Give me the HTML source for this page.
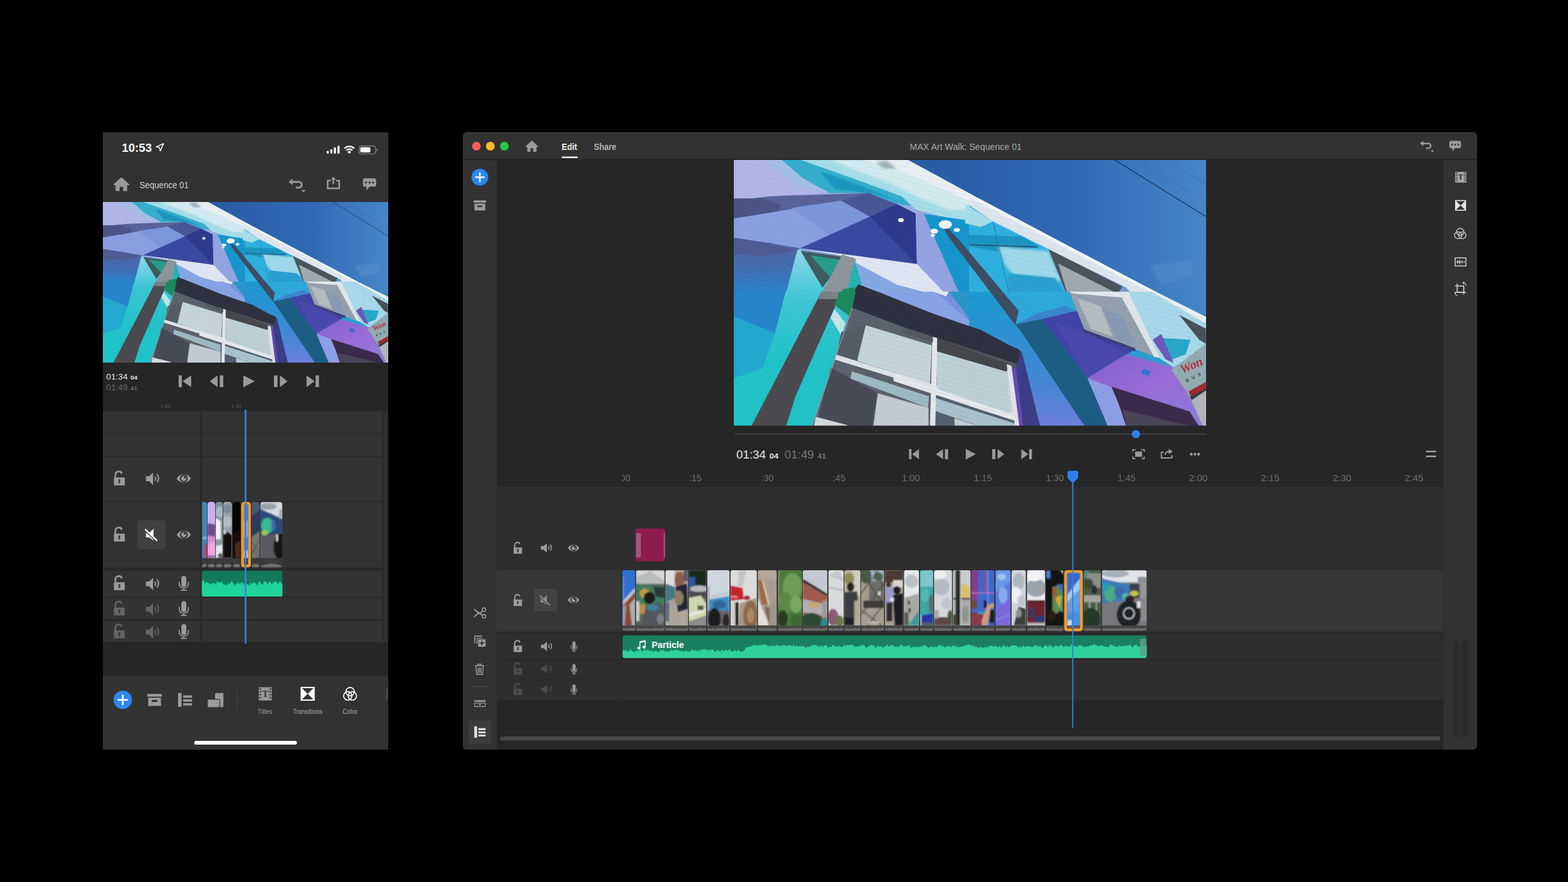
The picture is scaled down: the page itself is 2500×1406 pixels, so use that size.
<!DOCTYPE html>
<html lang="en"><head><meta charset="utf-8"><title>Rush – mobile and desktop</title>
<style>
html,body{margin:0;padding:0;background:#000}
body{width:2500px;height:1406px;overflow:hidden;position:relative;font-family:"Liberation Sans", sans-serif}
.phone{position:absolute;left:164px;top:211px;width:455px;height:984px;background:#323232;overflow:hidden}
.win{position:absolute;left:738px;top:211px;width:1617px;height:984px;background:#262626;border-radius:6px;overflow:hidden}
.phone>svg,.win>svg{position:absolute;left:0;top:0;display:block}
.defs{position:absolute;width:0;height:0;overflow:hidden}
text{font-family:"Liberation Sans", sans-serif}
</style></head>
<body>
<svg class="defs" width="0" height="0" aria-hidden="true"><defs>
<symbol id="i-home" viewBox="0 0 20 18" preserveAspectRatio="none" overflow="visible"><path fill="currentColor" d="M10 0L20 9.3v1h-2.6V18h-5.2v-5.6H7.8V18H2.6v-7.7H0v-1z"/></symbol>
<symbol id="i-undo" viewBox="0 0 27.3 21.4" preserveAspectRatio="none" overflow="visible"><path fill="currentColor" d="M0 4.9L6.6 0v9.9z"/><path fill="none" stroke="currentColor" stroke-width="3" d="M6 4.9h10.6a4.5 4.5 0 0 1 0 9h-4.8"/><path fill="currentColor" d="M20.7 17.7h6.6l-3.3 3.7z"/></symbol>
<symbol id="i-share" viewBox="0 0 20.9 19.7" preserveAspectRatio="none" overflow="visible"><path fill="none" stroke="currentColor" stroke-width="2.5" d="M6.2 6.05H1.25v12.4h18.4V6.05H14.7"/><path fill="currentColor" d="M10.45 0l4.1 4.7h-2.85v7H9.2v-7H6.35z"/></symbol>
<symbol id="i-comment" viewBox="0 0 20.9 19.4" preserveAspectRatio="none" overflow="visible"><path fill="currentColor" fill-rule="evenodd" d="M2.6 0h15.7a2.6 2.6 0 0 1 2.6 2.6v8.2a2.6 2.6 0 0 1-2.6 2.6h-8L5.4 19.4v-6H2.6A2.6 2.6 0 0 1 0 10.8V2.6A2.6 2.6 0 0 1 2.6 0zM3.1 6.7a1.7 1.7 0 1 0 3.4 0a1.7 1.7 0 1 0-3.4 0zM8.75 6.7a1.7 1.7 0 1 0 3.4 0a1.7 1.7 0 1 0-3.4 0zM14.4 6.7a1.7 1.7 0 1 0 3.4 0a1.7 1.7 0 1 0-3.4 0z"/></symbol>
<symbol id="i-skipstart" viewBox="0 0 20 18.3" preserveAspectRatio="none" overflow="visible"><path fill="currentColor" d="M0 0h5.1v18.3H0zM6.4 9.15L20 0v18.3z"/></symbol>
<symbol id="i-stepback" viewBox="0 0 21.6 18.3" preserveAspectRatio="none" overflow="visible"><path fill="currentColor" d="M0 9.15L12.5 0v18.3zM16 0h5.6v18.3H16z"/></symbol>
<symbol id="i-play" viewBox="0 0 18.1 18.7" preserveAspectRatio="none" overflow="visible"><path fill="currentColor" d="M0 0l18.1 9.35L0 18.7z"/></symbol>
<symbol id="i-stepfwd" viewBox="0 0 21.6 18.3" preserveAspectRatio="none" overflow="visible"><path fill="currentColor" d="M0 0h5.6v18.3H0zM9.6 0l12 9.15-12 9.15z"/></symbol>
<symbol id="i-skipend" viewBox="0 0 19.7 18.3" preserveAspectRatio="none" overflow="visible"><path fill="currentColor" d="M0 0l12.8 9.15L0 18.3zM14.4 0h5.3v18.3h-5.3z"/></symbol>
<symbol id="i-lock" viewBox="0 0 17.8 23.6" preserveAspectRatio="none" overflow="visible"><path fill="currentColor" fill-rule="evenodd" d="M.3 11.1h17.2v12.5H.3zM7.2 15.6a1.7 1.7 0 1 1 2.7 1.4l.5 3.1H7.4l.5-3.100a1.700 1.700 0 0 1-.700-1.400z"/><path fill="none" stroke="currentColor" stroke-width="2.600" d="M2.600 11.500V6.600A5.300 5.300 0 0 1 12.900 4.900"/></symbol>
<symbol id="i-speaker" viewBox="0 0 21 20.1" preserveAspectRatio="none" overflow="visible"><path fill="currentColor" d="M0 6h5.100L11.400 0v20.100L5.100 13.600H0z"/><path fill="none" stroke="currentColor" stroke-width="2" d="M14 6.300a4.700 4.700 0 0 1 0 6.800M17.300 2.800a8.600 8.600 0 0 1 0 12.700"/></symbol>
<symbol id="i-eye" viewBox="0 0 22.8 16.4" preserveAspectRatio="none" overflow="visible"><path fill="currentColor" d="M0 8.200C4.600-.500 18.200-.500 22.800 8.200c-4.600 8.700-18.200 8.700-22.800 0z"/><circle cx="11.400" cy="8.200" r="6.300" fill="#323232"/><circle cx="11.400" cy="8.200" r="4" fill="currentColor"/><circle cx="13.100" cy="6.500" r="1.700" fill="#323232"/></symbol>
<symbol id="i-mute" viewBox="0 0 20 20.5" preserveAspectRatio="none" overflow="visible"><path fill="currentColor" d="M1.600 7.200h5L13.600 .700v18.500l-7-5.100h-5z"/><path stroke="#414141" stroke-width="1.700" d="M-.500 3.300l18 17.300"/><path stroke="currentColor" stroke-width="2.500" stroke-linecap="round" d="M1 1.900l17.800 17.100"/></symbol>
<symbol id="i-mic" viewBox="0 0 16.2 23.7" preserveAspectRatio="none" overflow="visible"><rect x="4.300" y="0" width="7.800" height="17.700" rx="3.900" fill="currentColor"/><path fill="none" stroke="currentColor" stroke-width="1.700" d="M.900 9.300v3.200a7.200 7.200 0 0 0 14.400 0V9.300M8.100 19.700v2.800M3.600 22.900h9.300"/></symbol>
<symbol id="i-archive" viewBox="0 0 23.5 19.1" preserveAspectRatio="none" overflow="visible"><path fill="currentColor" fill-rule="evenodd" d="M0 0h23.5v4.3H0zM1.6 6.1h20.3v13H1.6zM7.3 9.6h8.9v3.3H7.3z"/></symbol>
<symbol id="i-list" viewBox="0 0 22.3 22.1" preserveAspectRatio="none" overflow="visible"><path fill="currentColor" d="M0 0h5.6v22.1H0zM8.2 3.8h14.1v3.7H8.2zM8.2 10h14.1v3.7H8.2zM8.2 16.2h14.1v3.6H8.2z"/></symbol>
<symbol id="i-layers" viewBox="0 0 24.9 22.5" preserveAspectRatio="none" overflow="visible"><rect x="11.6" y="0" width="13.3" height="22.5" rx="1.2" fill="currentColor"/><rect x="-.9" y="9.6" width="20.6" height="14" rx="1.2" fill="#323232"/><rect x="0" y="10.6" width="18.6" height="11.9" rx="1" fill="currentColor"/></symbol>
<symbol id="i-titles" viewBox="0 0 20.6 21.1" preserveAspectRatio="none" overflow="visible"><rect width="20.6" height="21.1" fill="currentColor"/><rect x="1.1" y="1.6" width="2" height="2.2" fill="#323232"/><rect x="1.1" y="6.2" width="2" height="2.2" fill="#323232"/><rect x="1.1" y="10.8" width="2" height="2.2" fill="#323232"/><rect x="1.1" y="15.4" width="2" height="2.2" fill="#323232"/><rect x="17.5" y="1.6" width="2" height="2.2" fill="#323232"/><rect x="17.5" y="6.2" width="2" height="2.2" fill="#323232"/><rect x="17.5" y="10.8" width="2" height="2.2" fill="#323232"/><rect x="17.5" y="15.4" width="2" height="2.2" fill="#323232"/><rect x="3.9" y="0" width=".6" height="21.1" fill="#323232" opacity=".5"/><rect x="16.1" y="0" width=".6" height="21.1" fill="#323232" opacity=".5"/><text x="10.3" y="15.2" style="font-family:Liberation Serif,serif" font-weight="bold" font-size="15" text-anchor="middle" fill="#323232">T</text></symbol>
<symbol id="i-trans" viewBox="0 0 22.5 22.1" preserveAspectRatio="none" overflow="visible"><rect width="22.5" height="22.1" fill="currentColor"/><path fill="#323232" d="M2.1 2h18.3l-9.15 9.05zM2.1 20.1h18.3l-9.15-9.05z"/></symbol>
<symbol id="i-color" viewBox="0 0 22.5 22.1" preserveAspectRatio="none" overflow="visible"><g fill="none" stroke="currentColor" stroke-width="1.7"><circle cx="11.25" cy="7.6" r="6.7"/><circle cx="7.6" cy="14.4" r="6.7"/><circle cx="14.9" cy="14.4" r="6.7"/></g></symbol>
<symbol id="i-audiofx" viewBox="0 0 18.8 14.5" preserveAspectRatio="none" overflow="visible"><rect x=".8" y=".8" width="17.2" height="12.9" fill="none" stroke="currentColor" stroke-width="1.6"/><path fill="currentColor" d="M2 7.25l1.6-.6 1-3.2 1.1 3.2 1.3.2 1.2-4 1.3 4.2 1.2.1 1.1-3 1.1 3 1.3.1.9-2 .9 2 1.4 0-1.4 .3-.9 2-.9-2-1.3 .1-1.1 3-1.1-3-1.2 .1-1.3 4.2-1.2-4-1.3 .2-1.1 3.200-1-3.200z"/></symbol>
<symbol id="i-crop" viewBox="0 0 19.8 23.5" preserveAspectRatio="none" overflow="visible"><g fill="none" stroke="currentColor" stroke-width="1.8"><path d="M4.600 3.600v13.800h13.600"/><path d="M1.400 7.200h13.600v13.600"/><path d="M14.400 2.300a4.300 4.300 0 0 1 4.300 4.300" stroke-width="1.300"/><path d="M5.400 22.400a4.300 4.300 0 0 1-4.300-4.300" stroke-width="1.300"/></g><path fill="currentColor" d="M12.600 2.300l3-2.300v4.600zM1.100 20.300l-1.100-3.300h4.400z" transform="translate(0,0)"/></symbol>
<symbol id="i-scissors" viewBox="0 0 19.6 17.7" preserveAspectRatio="none" overflow="visible"><g fill="none" stroke="currentColor" stroke-width="1.6"><circle cx="16" cy="3.600" r="2.800"/><circle cx="16" cy="14.100" r="2.800"/></g><path fill="currentColor" d="M0 1.600l13.800 9.800-.9 1.700-5.300-2.900L0 16.100v-1.800l5.800-5.400L0 3.400zM13.600 5.200l.9 1.500-4.300 3-1.500-1.100z"/></symbol>
<symbol id="i-dup" viewBox="0 0 18 18" preserveAspectRatio="none" overflow="visible"><path fill="none" stroke="currentColor" stroke-width="1.600" d="M.800 12.400V.800h11.600"/><path fill="currentColor" fill-rule="evenodd" d="M3.600 3.600h10v1.400h-8.600v8.600h-1.400z"/><path fill="currentColor" fill-rule="evenodd" d="M6.200 6.200H18V18H6.200zM11.200 8.200h1.800v3h3v1.800h-3v3h-1.800v-3h-3v-1.800h3z"/></symbol>
<symbol id="i-trash" viewBox="0 0 15.7 18" preserveAspectRatio="none" overflow="visible"><path fill="none" stroke="currentColor" stroke-width="1.400" d="M.300 3.300h15.100M5.200 3V.700h5.300V3M1.900 3.600l1.300 13.700h9.300l1.300-13.700M5.600 6v9M7.850 6v9M10.100 6v9"/></symbol>
<symbol id="i-instrack" viewBox="0 0 18 10.8" preserveAspectRatio="none" overflow="visible"><path fill="currentColor" d="M0 0h18v2.600H0z"/><path fill="none" stroke="currentColor" stroke-width="1.300" d="M.650 4.600h16.700v5.500H.650z"/><path fill="currentColor" d="M6.800 6h4.400L9 8.800z"/></symbol>
<symbol id="i-fullscreen" viewBox="0 0 19.8 16" preserveAspectRatio="none" overflow="visible"><path fill="none" stroke="currentColor" stroke-width="1.700" d="M.850 4.600V.850h4.200M14.750 .850h4.200V4.600M18.950 11.400v3.750h-4.200M5.050 15.150H.850V11.400"/><rect x="4.400" y="3.800" width="11" height="8.400" fill="currentColor"/></symbol>
<symbol id="i-export" viewBox="0 0 19.2 15.5" preserveAspectRatio="none" overflow="visible"><path fill="none" stroke="currentColor" stroke-width="1.900" d="M4.600 5.500H.950v9.050h16.700v-4.200"/><path fill="none" stroke="currentColor" stroke-width="1.900" d="M7.200 9.200c0-3 2-4.900 6-4.900"/><path fill="currentColor" d="M12.600 0l6.600 4.300-6.600 4.300z"/></symbol>
<symbol id="i-note" viewBox="0 0 14.1 14.4" preserveAspectRatio="none" overflow="visible"><path fill="currentColor" d="M4.400 1.800L14.100 0v10.900a2.500 2.200 0 1 1-1.500-2V2.900L5.900 4.100v8.300a2.500 2.200 0 1 1-1.500-2z"/></symbol>
<linearGradient id="ph-sky" x1="0" y1="0" x2="1" y2="0"><stop offset="0" stop-color="#2a5aa2"/><stop offset=".55" stop-color="#3069b3"/><stop offset="1" stop-color="#4586c8"/></linearGradient>
<linearGradient id="ph-wall" x1="0" y1="0" x2="0" y2="1"><stop offset="0" stop-color="#aab2e6"/><stop offset=".45" stop-color="#7f9ddc"/><stop offset=".7" stop-color="#2f9fd0"/><stop offset="1" stop-color="#22c3c6"/></linearGradient>
<linearGradient id="ph-lw" x1="0" y1="0" x2="0" y2="1"><stop offset="0" stop-color="#3a7fd0"/><stop offset=".5" stop-color="#25a8cc"/><stop offset="1" stop-color="#22c6c8"/></linearGradient>
<linearGradient id="ph-band" x1="0" y1="0" x2="0" y2="1"><stop offset="0" stop-color="#1c9bd0"/><stop offset=".6" stop-color="#3d8ad4"/><stop offset="1" stop-color="#6c7fdc"/></linearGradient>
<linearGradient id="ph-purp" x1="0" y1="0" x2="1" y2="1"><stop offset="0" stop-color="#8463cc"/><stop offset=".5" stop-color="#9a6cd6"/><stop offset="1" stop-color="#8a7edc"/></linearGradient>
<linearGradient id="ph-slate" x1="0" y1="0" x2="0" y2="1"><stop offset="0" stop-color="#56629c"/><stop offset=".6" stop-color="#3f6fb4"/><stop offset="1" stop-color="#2786cc"/></linearGradient>
<linearGradient id="ph-wedge" gradientUnits="userSpaceOnUse" x1="0" y1="140" x2="0" y2="330"><stop offset="0" stop-color="#93d8ec"/><stop offset=".45" stop-color="#3cc6d4"/><stop offset="1" stop-color="#20c3c8"/></linearGradient>
<filter id="ph-b2" x="-10%" y="-10%" width="120%" height="120%"><feGaussianBlur stdDeviation="2.2"/></filter>
<filter id="ph-soft" x="-2%" y="-2%" width="104%" height="104%"><feGaussianBlur stdDeviation="0.7"/></filter>
<filter id="ph-b1" x="-10%" y="-10%" width="120%" height="120%"><feGaussianBlur stdDeviation="0.8"/></filter>
<pattern id="ph-brick" width="40" height="7" patternUnits="userSpaceOnUse" patternTransform="rotate(14)"><rect width="40" height="7" fill="none"/><path d="M0 .5h40" stroke="#0a1440" stroke-opacity=".05" stroke-width="1"/><path d="M10 0v7M30 0v7" stroke="#0a1440" stroke-opacity=".02" stroke-width="1"/></pattern>
<clipPath id="ph-clip"><rect width="753" height="423.6"/></clipPath>
<symbol id="photo" viewBox="0 0 753 423.6" preserveAspectRatio="none"><g clip-path="url(#ph-clip)"><g filter="url(#ph-soft)">
<rect width="753" height="423.6" fill="url(#ph-wall)"/>
<polygon points="0.0,0.0 79.5,0.0 116.2,27.5 152.9,52.0 61.2,57.3 0.0,63.5" fill="#b2b6e8" />
<polygon points="45.9,0.0 122.3,0.0 152.9,50.5 107.0,45.9" fill="#a3bfe6" filter="url(#ph-b2)"/>
<polygon points="76.5,0.0 122.3,0.0 191.1,29.1 267.6,56.6 282.9,73.4 259.9,70.3 214.1,52.8 152.9,52.8 110.1,29.1" fill="#35aecb" />
<polygon points="137.6,18.3 198.8,39.8 259.9,64.2 214.1,52.8 160.6,45.9" fill="#1f96c0" filter="url(#ph-b1)"/>
<polygon points="107.0,0.0 279.8,0.0 380.0,52.0 380.0,97.9 351.7,96.3 321.1,87.2 290.5,79.5 267.6,58.1 191.1,29.8" fill="#a5dde8" />
<polygon points="152.9,0.0 279.8,0.0 380.0,52.0 380.0,79.5 344.0,79.5 298.2,61.2 244.6,35.2 198.8,18.3" fill="#d2eaf0" filter="url(#ph-b2)"/>
<polygon points="203.4,0.0 279.8,0.0 380.0,52.0 380.0,67.3 298.2,30.6 244.6,9.2" fill="#e8eff4" />
<polygon points="226.3,3.1 244.6,1.5 259.9,13.8 238.5,13.8" fill="#9fb4bf" filter="url(#ph-b2)"/>
<polygon points="279.8,0.0 380.0,0.0 380.0,52.0" fill="#2a5aa2" />
<polygon points="0.0,64.2 61.2,57.8 214.1,52.8 259.9,70.6 217.1,90.2 171.3,65.0 76.5,81.0 0.0,93.3" fill="#59639a" />
<polygon points="0.0,61.2 45.9,61.2 76.5,71.9 65.7,85.6 0.0,93.3" fill="#4c5486" />
<polygon points="0.0,93.3 76.5,81.0 171.3,65.0 217.1,90.2 105.5,140.7 0.0,123.9" fill="#8a9fe2" />
<polygon points="91.7,76.5 171.3,65.0 217.1,90.2 152.9,119.3" fill="#7d97dc" />
<polygon points="171.3,65.0 214.1,52.8 259.9,70.6 217.1,90.2" fill="#4a5796" />
<polygon points="217.1,90.2 259.9,70.6 289.8,85.6 292.0,165.9 105.5,140.7" fill="#3a48a0" />
<polygon points="217.1,90.2 259.9,70.6 289.8,85.6 291.3,165.9" fill="#2d3a8c" />
<polygon points="0.0,123.9 105.5,140.7 100.9,145.3 82.6,215.0 0.0,215.0" fill="url(#ph-slate)" />
<polygon points="0.0,123.9 61.2,133.0 100.9,145.3 45.9,152.9 0.0,149.8" fill="#4f5c94" />
<polygon points="105.5,141.4 154.4,188.1 137.6,215.0 82.6,215.0 100.9,145.3" fill="url(#ph-wedge)" />
<polygon points="106.4,145.0 171.8,154.1 153.5,187.6 141.4,203.5" fill="#3d5c60" />
<polygon points="121.6,151.8 170.2,159.4 153.5,186.8" fill="#2a9c8c" />
<polygon points="105.5,140.7 292.0,165.9 380.0,215.0 192.7,215.0 191.1,156.0" fill="#dfe6f3" />
<polygon points="191.1,162.1 259.9,198.8 321.1,215.0 192.7,215.0" fill="#86a7e2" />
<polygon points="191.1,156.0 191.1,215.0 175.8,215.0 188.1,154.4" fill="#5fb8d8" />
<polygon points="289.8,85.6 303.0,86.0 386.0,272.0 339.0,215.0 292.0,166.0" fill="#94a4e2" />
<polygon points="303.0,86.0 385.0,98.0 385.0,272.0 386.0,272.0" fill="#1796cc" />
<polygon points="172.8,150.6 195.0,158.3 178.9,215.0 139.9,215.0" fill="#8d959b" />
<polygon points="192.3,160.2 203.7,195.2 197.6,211.9 180.1,210.4" fill="#25b3b4" />
<polygon points="174.8,205.8 196.1,202.8 193.8,211.9 168.7,211.9" fill="#1d8a5c" />
<polygon points="199.1,198.2 230.3,210.4 192.3,210.7 195.8,201.5" fill="#2f3040" />
<polygon points="375.0,0.0 752.7,0.0 752.7,215.0 682.3,215.0 375.0,52.8" fill="url(#ph-sky)" />
<polygon points="665.5,168.2 726.7,160.6 734.3,183.5 680.8,198.8" fill="#5b90cc" filter="url(#ph-b2)" opacity=".6"/>
<polyline points="607.4,0.0 752.7,90.2" fill="none" stroke="#1b2c52" stroke-width="1.2" />
<polyline points="638.0,0.0 752.7,67.3" fill="none" stroke="#3a5f98" stroke-width="0.6" />
<polyline points="690.0,0.0 752.7,38.2" fill="none" stroke="#3a5f98" stroke-width="0.6" />
<polygon points="375.0,67.3 413.2,97.9 501.9,142.2 529.4,215.0 375.0,215.0" fill="#2eb0de" />
<polygon points="375.0,119.3 460.6,122.3 485.1,137.6 439.2,149.8 375.0,137.6" fill="#1f95c2" />
<polygon points="420.9,137.6 501.9,145.3 521.8,192.7 460.6,203.4 433.1,168.2" fill="#9fd9ea" filter="url(#ph-b2)"/>
<polygon points="439.2,180.4 512.6,188.1 527.9,215.0 436.2,215.0" fill="#2a9fd0" filter="url(#ph-b1)"/>
<polyline points="376.5,135.3 484.3,138.8" fill="none" stroke="#264a6a" stroke-width="1.5" />
<polyline points="409.4,79.5 439.2,215.0" fill="none" stroke="#2b6f98" stroke-width="0.8" />
<polygon points="368.9,70.3 413.2,97.9 393.3,107.0 368.9,100.9" fill="#a5dde8" />
<polygon points="375.0,52.8 682.3,215.0 634.9,215.0 625.8,203.4 501.9,142.2 413.2,97.9 375.0,71.9" fill="#dde6ec" />
<polygon points="375.0,52.8 682.3,215.0 671.6,215.0 375.0,58.9" fill="#f3f6f8" />
<polygon points="501.9,142.2 619.6,201.8 610.5,215.0 531.0,215.0" fill="#4c545a" />
<polygon points="517.2,165.1 610.5,212.5 610.5,215.0 532.5,215.0" fill="#a0aaae" />
<polygon points="0.0,210.0 137.6,210.0 82.6,425.0 0.0,425.0" fill="url(#ph-lw)" />
<polygon points="0.0,210.0 82.6,210.0 65.7,275.7 0.0,249.8" fill="#2786cc" />
<polygon points="82.6,210.0 138.4,210.0 85.6,362.9 45.9,425.0 0.0,425.0 0.0,347.6 65.7,275.7" fill="url(#ph-wedge)" />
<polygon points="0.0,249.8 65.7,275.7 45.9,332.3 0.0,347.6" fill="#24a9cf" />
<polygon points="139.9,210.0 172.0,210.0 130.0,304.8 97.9,378.2 83.3,425.0 27.5,425.0" fill="#4b4b50" />
<polygon points="139.9,210.0 172.0,210.0 166.7,222.2 134.6,221.5" fill="#7a8288" />
<polygon points="172.0,210.0 194.2,210.0 128.4,425.0 83.3,425.0 97.9,378.2 130.0,304.8" fill="url(#ph-wedge)" />
<polygon points="168.2,210.0 195.0,210.0 185.8,249.8 160.6,231.4" fill="#1d8a5c" />
<polygon points="160.6,237.5 178.1,260.5 171.3,280.3 154.4,251.3" fill="#bfe6e6" />
<polygon points="194.2,210.0 380.0,210.0 380.0,271.2 229.4,210.0" fill="#7a93de" />
<polygon points="229.4,210.0 321.1,210.0 380.0,260.5 380.0,271.2" fill="#88a3e6" />
<polygon points="318.0,210.0 342.5,210.0 338.7,217.6" fill="#e4ecf4" />
<polygon points="342.5,210.0 380.0,210.0 380.0,260.5 363.9,237.5" fill="#2a96c8" />
<polygon points="194.2,210.0 229.4,210.0 380.0,269.6 380.0,307.9 188.8,236.0" fill="#2f3040" />
<polygon points="188.8,236.0 380.0,307.9 380.0,425.0 124.6,425.0" fill="#5b626c" />
<polygon points="210.2,263.5 315.7,295.6 312.7,357.6 196.5,320.1" fill="#c4d4d8" />
<polygon points="171.3,274.2 210.2,263.5 196.5,320.1 164.4,309.4" fill="#555c66" />
<polygon points="324.9,303.3 380.0,322.4 380.0,378.2 324.2,360.6" fill="#c9d5da" />
<polygon points="154.4,330.8 229.4,372.1 220.2,425.0 131.5,425.0" fill="#474c56" />
<polygon points="188.1,336.9 311.2,376.7 309.6,395.0 185.8,348.4" fill="#9dbac4" />
<polygon points="229.4,372.1 310.4,395.0 310.4,425.0 222.5,425.0" fill="#c3cbd4" />
<polygon points="321.1,378.2 380.0,398.8 380.0,425.0 321.1,425.0" fill="#aebcc6" />
<polygon points="162.8,310.2 380.0,377.4 380.0,385.8 159.8,317.8" fill="#dfe3e6" />
<polygon points="316.5,281.9 324.9,284.9 321.9,425.0 312.7,425.0" fill="#e4e7ea" />
<polygon points="130.7,409.5 180.4,422.5 180.4,425.0 127.7,425.0" fill="#d5d9dc" />
<polyline points="188.8,236.0 124.6,425.0" fill="none" stroke="#9aa0a6" stroke-width="1.2" />
<polygon points="375.0,210.0 752.7,210.0 752.7,425.0 375.0,425.0" fill="#2a9fd2" />
<polygon points="375.0,210.0 425.5,210.0 560.0,425.0 480.5,425.0 454.5,301.7 375.0,269.6" fill="url(#ph-band)" />
<polygon points="425.5,210.0 534.8,210.0 547.0,240.6 491.2,253.6 449.2,262.0 454.5,240.6" fill="#2fa9da" />
<polygon points="449.2,262.0 491.2,253.6 547.0,240.6 527.9,232.9 482.0,245.2" fill="#3b86cc" />
<polygon points="449.2,262.0 491.2,253.6 563.8,347.6 596.7,425.0 560.0,425.0 472.9,295.6" fill="#1f5d84" />
<polygon points="491.2,253.6 547.0,240.6 560.8,274.2 640.3,301.7 626.5,309.4 563.8,347.6" fill="#3f44a4" />
<polygon points="512.6,260.5 560.8,274.2 626.5,309.4 563.8,347.6" fill="#4a48ac" />
<polygon points="563.8,347.6 626.5,309.4 701.5,330.8 742.0,408.8 752.7,425.0 596.7,425.0" fill="url(#ph-purp)" />
<polygon points="563.8,347.6 604.4,362.9 625.8,425.0 596.7,425.0" fill="#8e9fe6" />
<polygon points="602.1,361.4 726.7,401.1 742.0,425.0 625.8,425.0 614.3,390.4" fill="#3a2c4c" />
<polygon points="619.6,398.1 731.3,425.0 627.3,425.0" fill="#4a4658" />
<polygon points="653.3,332.3 665.5,336.9 660.9,344.6 648.7,340.0" fill="#3b6fd0" />
<polygon points="375.0,269.6 454.5,301.7 483.6,425.0 451.5,425.0 440.0,330.0 375.0,307.9" fill="#2f3040" />
<polygon points="439.2,317.0 460.6,347.6 485.1,425.0 454.5,425.0" fill="#5a4aa8" />
<polygon points="375.0,307.9 440.0,330.0 451.5,425.0 375.0,425.0" fill="#c9d1d6" />
<polygon points="375.0,307.9 440.0,330.0 439.2,336.9 375.0,315.5" fill="#6c7078" />
<polygon points="375.0,379.7 448.4,404.2 449.9,414.9 375.0,388.9" fill="#e0e3e6" />
<polygon points="435.4,330.8 442.3,332.3 453.0,425.0 446.9,425.0" fill="#d4d8dc" />
<polygon points="534.8,210.0 613.5,210.0 680.0,317.0 640.3,301.7 560.8,274.2" fill="#94a0ac" />
<polygon points="534.8,210.0 613.5,210.0 619.6,219.2 541.7,213.1" fill="#e6eaec" />
<polygon points="547.8,220.7 584.5,232.9 604.4,281.9 569.2,269.6" fill="#b4bcc0" />
<polygon points="587.5,236.0 619.6,248.2 644.1,300.2 610.5,286.5" fill="#879bb4" />
<polygon points="613.5,210.0 631.9,210.0 680.8,315.5 670.1,314.0" fill="#dfe5e8" />
<polygon points="557.0,269.6 640.3,300.2 640.3,305.6 558.5,275.0" fill="#3d3f78" />
<polygon points="628.8,210.0 673.2,210.0 752.7,249.8 752.7,295.6 701.5,330.8 680.0,317.0" fill="#a8d8ea" />
<polygon points="673.2,210.0 752.7,210.0 752.7,249.8" fill="#3a78c0" />
<polygon points="665.5,210.0 673.2,210.0 752.7,249.8 752.7,260.5" fill="#e8eef2" />
<polygon points="674.7,283.4 728.2,286.5 720.6,309.4 697.6,318.6" fill="#27a7c9" />
<polygon points="667.8,286.5 681.6,277.3 701.5,323.9 688.5,317.8" fill="#6a5ab8" />
<polygon points="709.9,246.7 752.7,268.9 752.7,293.3 742.0,286.5" fill="#4c5158" />
<polygon points="697.6,334.6 752.7,292.6 752.7,425.0 748.1,425.0 723.6,372.1" fill="#93abb1" />
<polygon points="727.0,377.5 753.0,361.5 753.0,367.5 730.0,383.0" fill="#3a3a42" />
<polygon points="730.0,383.0 753.0,367.5 753.0,425.0 748.0,425.0" fill="#b0b6ba" />
<polygon points="725.2,369.0 752.7,353.7 752.7,364.4 728.2,376.7" fill="#9c2c34" />
<text transform="translate(715,341) rotate(-24)" font-size="20" font-weight="bold" font-style="italic" fill="#b8303c" style="font-family:Liberation Serif,serif">Won</text>
<text transform="translate(722,354.500) rotate(-26)" font-size="7" font-weight="bold" fill="#2c3c40" letter-spacing="5.500">BUS</text>
<polygon points="442.2,323.1 459.4,306.4 488.9,426.8 455.6,426.8" fill="#3b3d86" />
<polygon points="442.2,323.1 449.2,326.9 462.0,426.8 455.6,426.8" fill="#6a48b0" />
<polygon points="270.0,243.5 312.9,243.5 392.9,270.6 458.2,305.2 451.1,325.0 270.0,266.1" fill="#2f3040" />
<polygon points="270.0,266.1 451.1,325.0 449.2,332.0 270.0,275.7" fill="#55595f" />
<polygon points="323.8,283.4 436.4,325.0 435.1,337.8 323.8,305.2" fill="#45474c" />
<polygon points="323.8,305.2 435.1,337.8 440.9,404.4 323.8,364.7" fill="#bdd0d5" />
<polygon points="321.2,374.9 449.2,415.9 452.4,426.8 319.9,426.8" fill="#52616f" />
<polygon points="321.2,379.4 449.2,420.4 449.2,426.8 398.0,426.8 321.2,399.9" fill="#a9c2ca" />
<polygon points="351.9,411.4 398.0,426.8 351.9,426.8" fill="#c2cdd4" />
<polygon points="254.6,342.3 449.2,407.6 449.2,415.9 254.6,352.5" fill="#e4e8ea" />
<polygon points="435.1,325.6 442.8,328.2 455.6,426.8 448.6,426.8" fill="#dfe4e8" />
<polygon points="317.6,282.1 324.3,284.0 321.2,426.8 314.5,426.8" fill="#e4e7ea" />
<polygon points="278.0,0.0 753.0,0.0 753.0,250.0 682.0,214.6 530.0,135.0 375.0,52.8" fill="url(#ph-sky)" />
<polyline points="607.4,0.0 752.7,90.2" fill="none" stroke="#1b2c52" stroke-width="1.2" />
<polyline points="638.0,0.0 752.7,67.3" fill="none" stroke="#3a5f98" stroke-width="0.6" />
<polyline points="690.0,0.0 752.7,38.2" fill="none" stroke="#3a5f98" stroke-width="0.6" />
<polygon points="665.5,168.2 726.7,160.6 734.3,183.5 680.8,198.8" fill="#5b90cc" filter="url(#ph-b2)" opacity=".5"/>
<polygon points="325.7,93.3 357.0,125.0 454.1,240.2 449.0,263.3 344.0,125.0" fill="#3d4d63" />
<ellipse cx="266.4" cy="95.9" rx="4.6" ry="3.1" fill="#f2f6f8"/>
<ellipse cx="337.2" cy="102.8" rx="10.7" ry="6.9" fill="#f2f6f8"/>
<ellipse cx="319.6" cy="113.5" rx="6.1" ry="4.0" fill="#f2f6f8"/>
<ellipse cx="317.3" cy="120.3" rx="3.4" ry="2.3" fill="#f2f6f8"/>
<ellipse cx="355.5" cy="111.6" rx="4.9" ry="3.1" fill="#f2f6f8"/>
<polygon points="0,0 280,0 753,255 753,423.6 0,423.6" fill="url(#ph-brick)"/>
</g></g></symbol>
<filter id="th-soft" x="-5%" y="-5%" width="110%" height="110%"><feGaussianBlur stdDeviation="0.8"/></filter>
</defs></svg>
<div class="phone"><svg viewBox="164 211 455 984" width="455" height="984">
<rect x="164.0" y="211.0" width="455.0" height="984.0" fill="#323232"/>
<use href="#photo" x="164" y="322" width="455" height="256"/>
<rect x="164.0" y="578.0" width="455.0" height="78.0" fill="#262626"/>
<rect x="164.0" y="655.5" width="455.0" height="368.5" fill="#292929"/>
<rect x="164.0" y="655.5" width="155.3" height="35.0" fill="#333333"/>
<rect x="321.8" y="655.5" width="287.7" height="35.0" fill="#333333"/>
<rect x="164.0" y="692.0" width="155.3" height="34.8" fill="#333333"/>
<rect x="321.8" y="692.0" width="287.7" height="34.8" fill="#333333"/>
<rect x="164.0" y="728.5" width="155.3" height="70.0" fill="#333333"/>
<rect x="321.8" y="728.5" width="287.7" height="70.0" fill="#333333"/>
<rect x="164.0" y="800.3" width="155.3" height="104.4" fill="#333333"/>
<rect x="321.8" y="800.3" width="287.7" height="104.4" fill="#333333"/>
<rect x="164.0" y="909.5" width="155.3" height="41.5" fill="#333333"/>
<rect x="321.8" y="909.5" width="287.7" height="41.5" fill="#333333"/>
<rect x="164.0" y="953.3" width="155.3" height="33.7" fill="#333333"/>
<rect x="321.8" y="953.3" width="287.7" height="33.7" fill="#333333"/>
<rect x="164.0" y="989.5" width="155.3" height="33.8" fill="#333333"/>
<rect x="321.8" y="989.5" width="287.7" height="33.8" fill="#333333"/>
<rect x="609.5" y="655.5" width="9.5" height="368.5" fill="#2c2c2c"/>
<rect x="613.0" y="660.0" width="3.0" height="362.0" fill="#343434"/>
<rect x="164.0" y="1024.0" width="455.0" height="53.0" fill="#262626"/>
<rect x="164.0" y="1077.0" width="455.0" height="118.0" fill="#323232"/>
<text x="194.3" y="241.6" font-size="18.5" fill="#ffffff" textLength="47.8" lengthAdjust="spacingAndGlyphs" font-weight="bold">10:53</text>
<path d="M260.8 228.9l-11.7 5.2 5.2 1.2 1.2 5.3z" fill="none" stroke="#fff" stroke-width="1.5" stroke-linejoin="round"/>
<rect x="520.8" y="240.4" width="3.3" height="4.4" fill="#fff" rx="0.8"/>
<rect x="526.6" y="237.9" width="3.3" height="6.9" fill="#fff" rx="0.8"/>
<rect x="532.3" y="235.1" width="3.3" height="9.7" fill="#fff" rx="0.8"/>
<rect x="538.0" y="232.4" width="3.5" height="12.4" fill="#fff" rx="0.8"/>
<g fill="none" stroke="#fff" stroke-width="2.3" stroke-linecap="butt"><path d="M549.2 236.6a11.2 11.2 0 0 1 15.6 0"/><path d="M552.2 239.7a6.9 6.9 0 0 1 9.6 0"/></g>
<path d="M557 245.2l-2.9-3a4.1 4.1 0 0 1 5.8 0z" fill="#fff"/>
<rect x="572.4" y="232.6" width="26.4" height="12.6" rx="3.4" fill="none" stroke="#8c8c8c" stroke-width="1.1"/>
<rect x="574.4" y="234.7" width="16.1" height="8.4" fill="#fff" rx="1.8"/>
<path d="M600.2 236.9c1.2 .4 1.6 1.1 1.6 2s-.4 1.6-1.6 2z" fill="#8c8c8c"/>
<use href="#i-home" x="181.0" y="282.5" width="25.0" height="22.0" color="#9b9b9b" />
<text x="222.5" y="299.8" font-size="15.3" fill="#d2d2d2" textLength="78.3" lengthAdjust="spacingAndGlyphs">Sequence 01</text>
<use href="#i-undo" x="459.9" y="285.2" width="27.3" height="21.4" color="#9b9b9b" />
<use href="#i-share" x="521.1" y="281.9" width="20.9" height="19.7" color="#9b9b9b" />
<use href="#i-comment" x="578.8" y="284.2" width="20.9" height="19.4" color="#9b9b9b" />
<text x="169.3" y="604.9" font-size="13" fill="#e6e6e6" textLength="34.2" lengthAdjust="spacingAndGlyphs">01:34</text>
<text x="208.0" y="604.9" font-size="9" fill="#e6e6e6" textLength="11.2" lengthAdjust="spacingAndGlyphs" font-weight="bold">04</text>
<text x="169.3" y="621.5" font-size="13" fill="#6a6a6a" textLength="34.2" lengthAdjust="spacingAndGlyphs">01:49</text>
<text x="208.0" y="621.5" font-size="9" fill="#6a6a6a" textLength="10.9" lengthAdjust="spacingAndGlyphs" font-weight="bold">41</text>
<use href="#i-skipstart" x="284.8" y="598.6" width="20.0" height="18.3" color="#9b9b9b" />
<use href="#i-stepback" x="334.4" y="598.6" width="21.6" height="18.3" color="#9b9b9b" />
<use href="#i-play" x="388.0" y="598.5" width="18.1" height="18.7" color="#9b9b9b" />
<use href="#i-stepfwd" x="436.8" y="598.6" width="21.6" height="18.3" color="#9b9b9b" />
<use href="#i-skipend" x="488.8" y="598.6" width="19.7" height="18.3" color="#9b9b9b" />
<text x="255.7" y="650.0" font-size="8" fill="#5c5c5c" textLength="16.3" lengthAdjust="spacingAndGlyphs">1:00</text>
<text x="368.0" y="650.0" font-size="8" fill="#5c5c5c" textLength="16.8" lengthAdjust="spacingAndGlyphs">1:30</text>
<use href="#i-lock" x="181.4" y="750.2" width="17.8" height="23.6" color="#9b9b9b" />
<use href="#i-speaker" x="232.7" y="753.3" width="21.0" height="20.1" color="#9b9b9b" />
<use href="#i-eye" x="281.7" y="754.6" width="22.6" height="16.2" color="#9b9b9b" />
<rect x="218.7" y="829.5" width="45.8" height="45.8" fill="#404040" rx="5"/>
<use href="#i-lock" x="181.4" y="839.6" width="17.8" height="23.6" color="#9b9b9b" />
<use href="#i-mute" x="231.1" y="842.4" width="20.0" height="20.5" color="#ffffff" />
<use href="#i-eye" x="281.9" y="844.3" width="22.4" height="16.0" color="#9b9b9b" />
<use href="#i-lock" x="181.4" y="917.1" width="17.8" height="23.6" color="#9b9b9b" />
<use href="#i-speaker" x="232.7" y="920.9" width="21.0" height="20.1" color="#9b9b9b" />
<use href="#i-mic" x="284.9" y="917.9" width="16.2" height="23.7" color="#9b9b9b" />
<use href="#i-lock" x="181.4" y="957.5" width="17.8" height="23.6" color="#646464" />
<use href="#i-speaker" x="232.7" y="961.3" width="21.0" height="20.1" color="#646464" />
<use href="#i-mic" x="284.9" y="958.3" width="16.2" height="23.7" color="#9b9b9b" />
<use href="#i-lock" x="181.4" y="994.0" width="17.8" height="23.6" color="#646464" />
<use href="#i-speaker" x="232.7" y="997.8" width="21.0" height="20.1" color="#646464" />
<use href="#i-mic" x="284.9" y="994.8" width="16.2" height="23.7" color="#9b9b9b" />
<g id="phone-clips">
<clipPath id="pk1"><path d="M321.9 800.1H325.6a4.5 4.5 0 0 1 4.5 4.5V900.1a4.5 4.5 0 0 1 -4.5 4.5H321.9z"/></clipPath><g clip-path="url(#pk1)"><clipPath id="pc1"><rect x="321.9" y="800.1" width="8.2" height="89.7" rx="0"/></clipPath>
<g clip-path="url(#pc1)"><rect x="319.9" y="798.1" width="12.2" height="93.7" fill="#3f88b8"/><g filter="url(#th-soft)"><rect x="321.9" y="855.7" width="8.2" height="3.6" fill="#8ac0e0"/><ellipse cx="329.3" cy="879.0" rx="3.7" ry="12.6" fill="#c03a5c"/><rect x="321.9" y="800.1" width="2.1" height="89.7" fill="#3a6a98" opacity="0.6"/></g></g>
<rect x="321.9" y="889.8" width="8.2" height="14.8" fill="#3a3a3a"/><ellipse cx="326.0" cy="905.6" rx="5.1" ry="7" fill="#6e6e6e"/></g>
<clipPath id="pk2"><rect x="330.7" y="800.1" width="12.3" height="104.5" rx="4.5"/></clipPath><g clip-path="url(#pk2)"><clipPath id="pc2"><rect x="330.7" y="800.1" width="12.3" height="89.7" rx="0"/></clipPath>
<g clip-path="url(#pc2)"><rect x="328.7" y="798.1" width="16.3" height="93.7" fill="#caaef2"/><g filter="url(#th-soft)"><polygon points="330.7,834.2 343.0,836.0 343.0,855.7 330.7,853.9" fill="#6e4c8c"/><polygon points="330.7,853.9 343.0,855.7 343.0,889.8 330.7,889.8" fill="#d888cc"/><ellipse cx="338.1" cy="876.3" rx="6.2" ry="13.5" fill="#f0a8e0"/><rect x="330.7" y="885.3" width="12.3" height="4.5" fill="#9a6aa8"/></g></g>
<rect x="330.7" y="889.8" width="12.3" height="14.8" fill="#3a3a3a"/><ellipse cx="336.9" cy="905.6" rx="7.2" ry="7" fill="#6e6e6e"/></g>
<clipPath id="pk3"><rect x="343.6" y="800.1" width="11.5" height="104.5" rx="4.5"/></clipPath><g clip-path="url(#pk3)"><clipPath id="pc3"><rect x="343.6" y="800.1" width="11.5" height="89.7" rx="0"/></clipPath>
<g clip-path="url(#pc3)"><rect x="341.6" y="798.1" width="15.5" height="93.7" fill="#7d93a3"/><g filter="url(#th-soft)"><ellipse cx="350.5" cy="816.2" rx="6.9" ry="9.0" fill="#a8b8c4"/><polygon points="343.6,825.2 351.7,830.6 352.2,861.1 343.6,859.3" fill="#f4f4f8"/><ellipse cx="350.5" cy="864.7" rx="6.9" ry="5.4" fill="#8898a4"/><polygon points="343.6,870.1 355.1,868.3 355.1,889.8 343.6,889.8" fill="#e4e8ec"/><ellipse cx="351.7" cy="886.2" rx="4.6" ry="4.5" fill="#5a6658"/></g></g>
<rect x="343.6" y="889.8" width="11.5" height="14.8" fill="#3a3a3a"/><ellipse cx="349.4" cy="905.6" rx="6.8" ry="7" fill="#6e6e6e"/></g>
<clipPath id="pk4"><rect x="355.7" y="800.1" width="14.2" height="104.5" rx="4.5"/></clipPath><g clip-path="url(#pk4)"><clipPath id="pc4"><rect x="355.7" y="800.1" width="14.2" height="89.7" rx="0"/></clipPath>
<g clip-path="url(#pc4)"><rect x="353.7" y="798.1" width="18.2" height="93.7" fill="#9aa2aa"/><g filter="url(#th-soft)"><ellipse cx="362.8" cy="810.9" rx="8.5" ry="7.2" fill="#7f8a94"/><ellipse cx="361.4" cy="831.5" rx="8.5" ry="9.0" fill="#b4bac0"/><polygon points="355.7,850.3 363.5,848.5 369.9,853.9 369.9,889.8 355.7,889.8" fill="#120c08"/><rect x="355.7" y="845.0" width="4.3" height="6.3" fill="#c8ccd0"/></g></g>
<rect x="355.7" y="889.8" width="14.2" height="14.8" fill="#3a3a3a"/><ellipse cx="362.8" cy="905.6" rx="8.1" ry="7" fill="#6e6e6e"/></g>
<clipPath id="pk5"><rect x="370.8" y="800.1" width="12.9" height="104.5" rx="4.5"/></clipPath><g clip-path="url(#pk5)"><clipPath id="pc5"><rect x="370.8" y="800.1" width="12.9" height="89.7" rx="0"/></clipPath>
<g clip-path="url(#pc5)"><rect x="368.8" y="798.1" width="16.9" height="93.7" fill="#040404"/><g filter="url(#th-soft)"><polygon points="370.8,849.4 383.7,845.0 383.7,880.8 374.7,889.8 370.8,889.8" fill="#1c100a"/><polygon points="374.7,867.4 383.7,861.1 383.7,889.8 376.0,889.8" fill="#4a2a1a"/></g></g>
<rect x="370.8" y="889.8" width="12.9" height="14.8" fill="#3a3a3a"/><ellipse cx="377.2" cy="905.6" rx="7.4" ry="7" fill="#6e6e6e"/></g>
<rect x="384.5" y="800.1" width="15.5" height="104.5" rx="4.5" fill="#f09a28"/><rect x="389" y="804.6" width="6.5" height="95.5" rx="1.2" fill="#3a3a3a"/><clipPath id="pc6"><rect x="389.0" y="804.6" width="6.5" height="85.4" rx="1"/></clipPath>
<g clip-path="url(#pc6)"><rect x="387.0" y="802.6" width="10.5" height="89.4" fill="#4a80d8"/><g filter="url(#th-soft)"><rect x="389.0" y="830.2" width="6.5" height="25.6" fill="#8ab0e8"/><rect x="389.0" y="877.2" width="6.5" height="12.8" fill="#c8d4e8"/></g></g>
<clipPath id="pk7"><rect x="400.7" y="800.1" width="13.6" height="104.5" rx="4.5"/></clipPath><g clip-path="url(#pk7)"><clipPath id="pc7"><rect x="400.7" y="800.1" width="13.6" height="89.7" rx="0"/></clipPath>
<g clip-path="url(#pc7)"><rect x="398.7" y="798.1" width="17.6" height="93.7" fill="#2c3c5c"/><g filter="url(#th-soft)"><polygon points="400.7,800.1 414.3,800.1 414.3,813.6 400.7,822.5" fill="#4a5870"/><polygon points="400.7,855.7 414.3,846.7 414.3,889.8 400.7,889.8" fill="#77776f"/><polyline points="400.7,862.9 414.3,880.8" fill="none" stroke="#3c3c38" stroke-width="1"/><polyline points="400.7,885.3 414.3,859.3" fill="none" stroke="#3c3c38" stroke-width="1"/><polyline points="400.7,873.7 414.3,889.8" fill="none" stroke="#3c3c38" stroke-width="1"/></g></g>
<rect x="400.7" y="889.8" width="13.6" height="14.8" fill="#3a3a3a"/><ellipse cx="407.5" cy="905.6" rx="7.8" ry="7" fill="#6e6e6e"/></g>
<clipPath id="pk8"><rect x="414.9" y="800.1" width="35.4" height="104.5" rx="4.5"/></clipPath><g clip-path="url(#pk8)"><clipPath id="pc8"><rect x="414.9" y="800.1" width="35.4" height="89.7" rx="0"/></clipPath>
<g clip-path="url(#pc8)"><rect x="412.9" y="798.1" width="39.4" height="93.7" fill="#5c5c62"/><g filter="url(#th-soft)"><rect x="414.9" y="800.1" width="35.4" height="26.9" fill="#d6dade"/><ellipse cx="427.3" cy="807.3" rx="14.2" ry="5.4" fill="#9aa2aa"/><polygon points="414.9,810.9 450.3,827.0 450.3,850.3 414.9,853.9" fill="#2c4a78"/><ellipse cx="426.2" cy="837.8" rx="9.9" ry="12.6" fill="#3ab890"/><ellipse cx="422.0" cy="849.4" rx="5.3" ry="4.5" fill="#9acc50"/><ellipse cx="436.1" cy="837.8" rx="3.5" ry="9.0" fill="#3a68b0"/><rect x="445.3" y="812.7" width="3.5" height="14.4" fill="#a0a4a8"/><polygon points="414.9,853.9 450.3,849.4 450.3,889.8 414.9,889.8" fill="#5a5a60"/><ellipse cx="448.5" cy="871.9" rx="12.4" ry="21.5" fill="#121216"/><rect x="440.4" y="852.1" width="2.8" height="10.8" fill="#e8e8e8"/></g></g>
<rect x="414.9" y="889.8" width="35.4" height="14.8" fill="#3a3a3a"/><ellipse cx="432.6" cy="905.6" rx="18.7" ry="7" fill="#6e6e6e"/></g>
</g>
<rect x="321.8" y="909.8" width="128.5" height="41.2" fill="#12795b" rx="3"/>
<path d="M321.8 948.0V927.9L321.8 927.9L323.4 925.2L325.0 925.1L326.6 931.3L328.2 927.5L329.8 928.2L331.4 929.5L333.0 928.7L334.6 932.8L336.2 929.3L337.8 930.6L339.4 929.3L341.0 929.5L342.6 929.4L344.2 933.1L345.8 926.3L347.4 927.3L349.0 929.0L350.6 928.5L352.2 926.6L353.8 928.5L355.4 930.5L357.0 932.6L358.6 931.2L360.2 932.3L361.8 933.1L363.4 929.6L365.0 930.7L366.6 930.3L368.2 928.3L369.8 925.2L371.4 929.3L373.0 930.7L374.6 934.1L376.2 930.0L377.8 931.5L379.4 926.4L381.0 930.9L382.6 928.4L384.2 930.5L385.8 927.2L387.4 929.1L389.0 933.6L390.6 928.2L392.2 928.5L393.8 931.0L395.4 932.0L397.0 933.6L398.6 926.9L400.2 932.9L401.8 928.2L403.4 930.5L405.0 927.3L406.6 930.1L408.2 929.4L409.8 933.3L411.4 930.9L413.0 925.8L414.6 927.0L416.2 931.5L417.8 930.2L419.4 932.3L421.0 926.4L422.6 927.0L424.2 927.1L425.8 930.0L427.4 931.1L429.0 927.3L430.6 927.3L432.2 929.5L433.8 932.2L435.4 927.0L437.0 928.6L438.6 927.6L440.2 927.0L441.8 928.7L443.4 931.0L445.0 928.0L446.6 927.6L448.2 929.0L449.8 931.9L450.3 931.9V948.0a3 3 0 0 1 -3 3H324.8a3 3 0 0 1 -3 -3z" fill="#1fd39a"/>
<rect x="390.2" y="652.5" width="2.7" height="373.9" fill="#3d7fdc" rx="1.3"/>
<circle cx="195.7" cy="1115.6" r="14.7" fill="#2d87f0"/>
<path d="M188.4 1115.6h14.6M195.7 1108.3v14.6" stroke="#fff" stroke-width="2.6" stroke-linecap="round"/>
<use href="#i-archive" x="234.7" y="1106.2" width="23.5" height="19.1" color="#9b9b9b" />
<use href="#i-list" x="283.9" y="1104.7" width="22.3" height="22.1" color="#9b9b9b" />
<use href="#i-layers" x="331.3" y="1104.7" width="24.9" height="22.5" color="#9b9b9b" />
<rect x="377.5" y="1101.9" width="1.2" height="27.9" fill="#454545"/>
<use href="#i-titles" x="412.6" y="1095.5" width="20.6" height="21.1" color="#9b9b9b" />
<text x="410.7" y="1137.6" font-size="10.8" fill="#9b9b9b" textLength="23.5" lengthAdjust="spacingAndGlyphs">Titles</text>
<use href="#i-trans" x="479.3" y="1094.9" width="22.5" height="22.1" color="#ffffff" />
<text x="466.9" y="1137.6" font-size="10.8" fill="#a8a8a8" textLength="47.3" lengthAdjust="spacingAndGlyphs">Transitions</text>
<use href="#i-color" x="546.9" y="1094.9" width="22.5" height="22.1" color="#ffffff" />
<text x="546.3" y="1137.6" font-size="10.8" fill="#a8a8a8" textLength="24.1" lengthAdjust="spacingAndGlyphs">Color</text>
<rect x="615.5" y="1097.0" width="2.9" height="18.0" fill="#484848"/>
<rect x="309.7" y="1181.1" width="163.7" height="5.9" fill="#ffffff" rx="3"/>
</svg></div>
<div class="win"><svg viewBox="738 211 1617 984" width="1617" height="984">
<rect x="738.0" y="211.0" width="1617.0" height="984.0" fill="#262626"/>
<rect x="738.0" y="211.0" width="1617.0" height="42.6" fill="#323232"/>
<rect x="738.0" y="211.0" width="1617.0" height="1.0" fill="#4a4a4a"/>
<rect x="738.0" y="253.6" width="1617.0" height="1.8" fill="#232323"/>
<rect x="738.0" y="255.4" width="54.0" height="939.6" fill="#323232"/>
<rect x="2301.2" y="255.4" width="53.8" height="939.6" fill="#323232"/>
<circle cx="759.6" cy="233" r="6.9" fill="#fc5b57"/><circle cx="781.8" cy="233" r="6.9" fill="#fdbc2e"/><circle cx="804.2" cy="233" r="6.9" fill="#27c83f"/>
<use href="#i-home" x="838.1" y="224.1" width="19.9" height="17.8" color="#9b9b9b" />
<text x="895.6" y="238.9" font-size="14.5" fill="#ececec" textLength="24.5" lengthAdjust="spacingAndGlyphs" font-weight="bold">Edit</text>
<rect x="895.6" y="249.5" width="25.6" height="2.6" fill="#f0f0f0" rx="1.2"/>
<text x="946.8" y="238.9" font-size="14.5" fill="#b4b4b4" textLength="35.9" lengthAdjust="spacingAndGlyphs" font-weight="bold">Share</text>
<text x="1450.6" y="238.9" font-size="14.5" fill="#aaaaaa" textLength="178.4" lengthAdjust="spacingAndGlyphs">MAX Art Walk: Sequence 01</text>
<use href="#i-undo" x="2263.9" y="224.5" width="22.4" height="18.2" color="#9b9b9b" />
<use href="#i-comment" x="2310.8" y="224.5" width="18.6" height="17.1" color="#9b9b9b" />
<circle cx="765.1" cy="282.5" r="13.4" fill="#2c86ee"/>
<path d="M758.4 282.5h13.4M765.1 275.8v13.4" stroke="#fff" stroke-width="2.5" stroke-linecap="round"/>
<use href="#i-archive" x="755.0" y="319.5" width="20.0" height="15.9" color="#9b9b9b" />
<use href="#i-scissors" x="755.5" y="968.3" width="19.6" height="17.7" color="#9b9b9b" />
<use href="#i-dup" x="756.2" y="1013.1" width="18.0" height="18.0" color="#9b9b9b" />
<use href="#i-trash" x="756.8" y="1058.0" width="15.7" height="18.0" color="#9b9b9b" />
<rect x="752.2" y="1093.8" width="26.2" height="1.2" fill="#4a4a4a"/>
<use href="#i-instrack" x="756.2" y="1116.2" width="18.0" height="10.8" color="#9b9b9b" />
<rect x="747.0" y="1148.9" width="36.0" height="36.0" fill="#3c3c3c" rx="3"/>
<use href="#i-list" x="756.2" y="1157.7" width="18.0" height="18.3" color="#e0e0e0" />
<use href="#i-titles" x="2320.0" y="274.0" width="17.9" height="17.1" color="#a4a4a4" />
<use href="#i-trans" x="2320.0" y="318.9" width="17.5" height="17.0" color="#e4e4e4" />
<use href="#i-color" x="2318.3" y="363.3" width="19.8" height="18.1" color="#c8c8c8" />
<use href="#i-audiofx" x="2319.3" y="410.2" width="18.8" height="14.5" color="#c8c8c8" />
<use href="#i-crop" x="2318.7" y="448.6" width="19.8" height="23.5" color="#c8c8c8" />
<rect x="2317.4" y="1022.5" width="8.8" height="151.7" fill="#2b2b2b"/>
<rect x="2330.8" y="1022.5" width="9.6" height="151.7" fill="#2b2b2b"/>
<use href="#photo" x="1170" y="255" width="753" height="423.6"/>
<rect x="1170.8" y="691.3" width="752.6" height="1.5" fill="#484848"/>
<circle cx="1811.1" cy="692" r="6.6" fill="#2d7fe8"/>
<text x="1174.0" y="731.0" font-size="18.7" fill="#e6e6e6" textLength="47.0" lengthAdjust="spacingAndGlyphs">01:34</text>
<text x="1226.8" y="731.0" font-size="10.5" fill="#e6e6e6" textLength="14.4" lengthAdjust="spacingAndGlyphs" font-weight="bold">04</text>
<text x="1250.8" y="731.0" font-size="18.7" fill="#777777" textLength="47.0" lengthAdjust="spacingAndGlyphs">01:49</text>
<text x="1303.6" y="731.0" font-size="10.5" fill="#777777" textLength="13.4" lengthAdjust="spacingAndGlyphs" font-weight="bold">41</text>
<use href="#i-skipstart" x="1449.2" y="716.0" width="16.0" height="16.0" color="#9b9b9b" />
<use href="#i-stepback" x="1492.4" y="716.0" width="19.2" height="16.0" color="#9b9b9b" />
<use href="#i-play" x="1539.8" y="715.4" width="16.0" height="17.2" color="#9b9b9b" />
<use href="#i-stepfwd" x="1582.0" y="716.0" width="19.2" height="16.0" color="#9b9b9b" />
<use href="#i-skipend" x="1628.4" y="716.0" width="17.0" height="16.0" color="#9b9b9b" />
<use href="#i-fullscreen" x="1805.4" y="716.0" width="19.8" height="16.0" color="#9b9b9b" />
<use href="#i-export" x="1850.8" y="715.5" width="19.2" height="15.5" color="#9b9b9b" />
<g fill="#9b9b9b"><circle cx="1899.4" cy="724" r="2.2"/><circle cx="1905.2" cy="724" r="2.2"/><circle cx="1911" cy="724" r="2.2"/></g>
<rect x="2273.6" y="718.6" width="16.1" height="2.2" fill="#b4b4b4"/>
<rect x="2273.6" y="726.4" width="16.1" height="2.2" fill="#b4b4b4"/>
<clipPath id="rulerclip"><rect x="991.8" y="745" width="1310" height="32"/></clipPath>
<g clip-path="url(#rulerclip)"><text x="985.2" y="767.4" font-size="14.5" fill="#6c6c6c" textLength="19.5" lengthAdjust="spacingAndGlyphs">:00</text>
</g>
<text x="1098.4" y="767.4" font-size="14.5" fill="#6c6c6c" textLength="20.2" lengthAdjust="spacingAndGlyphs">:15</text>
<text x="1213.5" y="767.4" font-size="14.5" fill="#6c6c6c" textLength="19.9" lengthAdjust="spacingAndGlyphs">:30</text>
<text x="1327.8" y="767.4" font-size="14.5" fill="#6c6c6c" textLength="20.2" lengthAdjust="spacingAndGlyphs">:45</text>
<text x="1438.0" y="767.4" font-size="14.5" fill="#6c6c6c" textLength="28.8" lengthAdjust="spacingAndGlyphs">1:00</text>
<text x="1552.6" y="767.4" font-size="14.5" fill="#6c6c6c" textLength="28.8" lengthAdjust="spacingAndGlyphs">1:15</text>
<text x="1667.4" y="767.4" font-size="14.5" fill="#6c6c6c" textLength="28.8" lengthAdjust="spacingAndGlyphs">1:30</text>
<text x="1782.0" y="767.4" font-size="14.5" fill="#6c6c6c" textLength="28.4" lengthAdjust="spacingAndGlyphs">1:45</text>
<text x="1895.6" y="767.4" font-size="14.5" fill="#6c6c6c" textLength="29.8" lengthAdjust="spacingAndGlyphs">2:00</text>
<text x="2010.2" y="767.4" font-size="14.5" fill="#6c6c6c" textLength="29.8" lengthAdjust="spacingAndGlyphs">2:15</text>
<text x="2124.8" y="767.4" font-size="14.5" fill="#6c6c6c" textLength="29.8" lengthAdjust="spacingAndGlyphs">2:30</text>
<text x="2239.4" y="767.4" font-size="14.5" fill="#6c6c6c" textLength="29.8" lengthAdjust="spacingAndGlyphs">2:45</text>
<rect x="792.0" y="775.8" width="1509.2" height="339.5" fill="#292929"/>
<rect x="792.0" y="775.8" width="198.6" height="31.6" fill="#2e2e2e"/>
<rect x="991.6" y="775.8" width="1309.6" height="31.6" fill="#2e2e2e"/>
<rect x="792.0" y="808.6" width="198.6" height="32.0" fill="#2e2e2e"/>
<rect x="991.6" y="808.6" width="1309.6" height="32.0" fill="#2e2e2e"/>
<rect x="792.0" y="841.8" width="198.6" height="65.2" fill="#2e2e2e"/>
<rect x="991.6" y="841.8" width="1309.6" height="65.2" fill="#2e2e2e"/>
<rect x="792.0" y="908.2" width="198.6" height="98.4" fill="#363636"/>
<rect x="991.6" y="908.2" width="1309.6" height="98.4" fill="#363636"/>
<rect x="792.0" y="1010.8" width="198.6" height="39.8" fill="#2e2e2e"/>
<rect x="991.6" y="1010.8" width="1309.6" height="39.8" fill="#2e2e2e"/>
<rect x="792.0" y="1052.2" width="198.6" height="31.2" fill="#2e2e2e"/>
<rect x="991.6" y="1052.2" width="1309.6" height="31.2" fill="#2e2e2e"/>
<rect x="792.0" y="1085.0" width="198.6" height="30.3" fill="#2e2e2e"/>
<rect x="991.6" y="1085.0" width="1309.6" height="30.3" fill="#2e2e2e"/>
<use href="#i-lock" x="818.7" y="863.6" width="14.0" height="19.2" color="#9b9b9b" />
<use href="#i-speaker" x="862.3" y="866.0" width="17.8" height="15.2" color="#9b9b9b" />
<use href="#i-eye" x="905.5" y="866.9" width="18.0" height="13.2" color="#9b9b9b" />
<rect x="852.0" y="938.6" width="36.3" height="35.9" fill="#434343" rx="3"/>
<use href="#i-lock" x="818.7" y="946.7" width="14.0" height="19.2" color="#9b9b9b" />
<use href="#i-mute" x="860.5" y="948.3" width="16.5" height="17.2" color="#8c8c8c" />
<use href="#i-eye" x="905.2" y="950.0" width="18.4" height="13.0" color="#9b9b9b" />
<use href="#i-lock" x="818.7" y="1020.1" width="14.0" height="19.4" color="#9b9b9b" />
<use href="#i-speaker" x="862.5" y="1022.8" width="17.8" height="15.4" color="#9b9b9b" />
<use href="#i-mic" x="909.9" y="1022.6" width="10.5" height="16.2" color="#9b9b9b" />
<use href="#i-lock" x="818.7" y="1056.0" width="14.0" height="19.4" color="#4c4c4c" />
<use href="#i-speaker" x="862.5" y="1058.7" width="17.8" height="15.4" color="#4c4c4c" />
<use href="#i-mic" x="909.9" y="1058.5" width="10.5" height="16.2" color="#9b9b9b" />
<use href="#i-lock" x="818.7" y="1088.6" width="14.0" height="19.4" color="#4c4c4c" />
<use href="#i-speaker" x="862.5" y="1091.3" width="17.8" height="15.4" color="#4c4c4c" />
<use href="#i-mic" x="909.9" y="1091.1" width="10.5" height="16.2" color="#9b9b9b" />
<rect x="1013.0" y="842.6" width="47.4" height="51.8" fill="#8e1b4f" rx="4"/>
<rect x="1014.2" y="849.6" width="7.6" height="39.2" fill="#a0587a" rx="2"/>
<rect x="1058.2" y="849.6" width="2.2" height="39.2" fill="#a0587a" rx="1"/>
<clipPath id="dk1"><rect x="992.2" y="909" width="20.6" height="96.8" rx="3.2"/></clipPath><g clip-path="url(#dk1)"><clipPath id="dc1"><rect x="992.2" y="909.0" width="20.6" height="88.2" rx="0"/></clipPath>
<g clip-path="url(#dc1)"><rect x="990.2" y="907.0" width="24.6" height="92.2" fill="#2f6fd2"/><g filter="url(#th-soft)"><polygon points="992.2,961.9 1012.8,939.0 1012.8,997.2 992.2,997.2" fill="#8a4636"/><polygon points="992.2,958.4 1012.8,936.3 1012.8,943.4 992.2,966.3" fill="#c0c0c8"/><polygon points="1003.5,963.7 1012.8,953.1 1012.8,997.2 1007.6,997.2" fill="#b4aca4"/><polygon points="992.2,969.0 998.4,963.7 996.3,997.2 992.2,997.2" fill="#9a9aa0"/><rect x="992.2" y="919.6" width="2.7" height="73.2" fill="#8fa0c0" opacity="0.55"/></g></g>
<path d="M992.2 997.2H1012.8V1005.8a0 0 0 0 1 0 0H992.2a0 0 0 0 1 0 0z" fill="#6a6a6a"/><path d="M992.2 997.2L992.2 1000.8L993.7 1002.1L995.2 1002.0L996.7 1001.1L998.2 1001.5L999.7 1001.4L1001.2 1001.8L1002.7 1002.0L1004.2 1000.8L1005.7 1000.7L1007.2 1002.1L1008.7 1001.4L1010.2 1002.0L1011.7 1000.6L1012.8 997.2z" fill="#444444"/>
</g>
<clipPath id="dk2"><rect x="1014.0" y="909" width="45.8" height="96.8" rx="3.2"/></clipPath><g clip-path="url(#dk2)"><clipPath id="dc2"><rect x="1014.0" y="909.0" width="45.8" height="88.2" rx="0"/></clipPath>
<g clip-path="url(#dc2)"><rect x="1012.0" y="907.0" width="49.8" height="92.2" fill="#596058"/><g filter="url(#th-soft)"><rect x="1014.0" y="909.0" width="45.8" height="22.1" fill="#d6d8d6"/><polygon points="1014.0,919.6 1036.9,910.8 1059.8,926.6 1059.8,931.0 1014.0,931.0" fill="#b8bcba"/><polygon points="1014.0,930.2 1059.8,936.3 1059.8,963.7 1014.0,984.9" fill="#3f7a5c"/><ellipse cx="1027.7" cy="946.0" rx="7.8" ry="7.9" fill="#b89a3c"/><ellipse cx="1024.1" cy="970.7" rx="5.5" ry="8.8" fill="#c08a3c"/><polygon points="1041.5,935.5 1059.8,936.3 1059.8,953.1 1046.1,951.3" fill="#2c3a34"/><ellipse cx="1035.5" cy="953.1" rx="9.2" ry="9.7" fill="#1c1c1e"/><polygon points="1030.0,967.2 1052.9,960.2 1059.8,977.8 1059.8,997.2 1022.2,997.2" fill="#53575b"/><ellipse cx="1041.5" cy="969.0" rx="10.1" ry="4.9" fill="#3f7a9c"/><rect x="1014.0" y="958.4" width="5.5" height="31.8" fill="#c8ccd0"/><ellipse cx="1052.9" cy="986.6" rx="5.5" ry="8.8" fill="#7a7e82"/></g></g>
<path d="M1014.0 997.2H1059.8V1005.8a0 0 0 0 1 0 0H1014.0a0 0 0 0 1 0 0z" fill="#6a6a6a"/><path d="M1014.0 997.2L1014.0 1002.3L1015.5 1002.3L1017.0 1000.7L1018.5 1000.8L1020.0 1002.1L1021.5 1001.9L1023.0 1001.8L1024.5 1001.2L1026.0 1001.7L1027.5 1001.7L1029.0 1001.6L1030.5 1000.9L1032.0 1001.4L1033.5 1001.3L1035.0 1001.9L1036.5 1002.4L1038.0 1002.3L1039.5 1001.6L1041.0 1001.4L1042.5 1001.1L1044.0 1000.7L1045.5 1000.6L1047.0 1001.4L1048.5 1001.2L1050.0 1001.3L1051.5 1002.2L1053.0 1001.5L1054.5 1001.6L1056.0 1001.0L1057.5 1000.6L1059.0 1001.2L1059.8 997.2z" fill="#444444"/>
</g>
<clipPath id="dk3"><rect x="1061.0" y="909" width="36.0" height="96.8" rx="3.2"/></clipPath><g clip-path="url(#dk3)"><clipPath id="dc3"><rect x="1061.0" y="909.0" width="36.0" height="88.2" rx="0"/></clipPath>
<g clip-path="url(#dc3)"><rect x="1059.0" y="907.0" width="40.0" height="92.2" fill="#aaa49a"/><g filter="url(#th-soft)"><rect x="1061.0" y="909.0" width="14.4" height="26.5" fill="#dddddf"/><polygon points="1061.0,930.2 1075.4,935.5 1077.2,953.1 1061.0,960.2" fill="#4a7886"/><ellipse cx="1083.3" cy="924.0" rx="7.9" ry="12.3" fill="#8c5a48"/><polygon points="1077.2,935.5 1095.2,930.2 1097.0,970.7 1080.8,975.2" fill="#26283a"/><ellipse cx="1082.6" cy="953.1" rx="7.2" ry="11.5" fill="#8a7f5e"/><rect x="1086.2" y="975.2" width="5.4" height="22.1" fill="#b8a898"/><rect x="1061.0" y="960.2" width="5.8" height="30.0" fill="#586a82"/><rect x="1089.8" y="909.0" width="7.2" height="17.6" fill="#5a5a68"/></g></g>
<path d="M1061.0 997.2H1097.0V1005.8a0 0 0 0 1 0 0H1061.0a0 0 0 0 1 0 0z" fill="#6a6a6a"/><path d="M1061.0 997.2L1061.0 1001.0L1062.5 1001.6L1064.0 1001.3L1065.5 1001.7L1067.0 1001.7L1068.5 1000.7L1070.0 1000.6L1071.5 1002.1L1073.0 1001.1L1074.5 1001.0L1076.0 1002.4L1077.5 1001.4L1079.0 1002.1L1080.5 1001.5L1082.0 1001.8L1083.5 1000.9L1085.0 1001.7L1086.5 1002.2L1088.0 1001.5L1089.5 1001.9L1091.0 1001.8L1092.5 1000.7L1094.0 1002.0L1095.5 1001.7L1097.0 997.2z" fill="#444444"/>
</g>
<clipPath id="dk4"><rect x="1098.1" y="909" width="27.9" height="96.8" rx="3.2"/></clipPath><g clip-path="url(#dk4)"><clipPath id="dc4"><rect x="1098.1" y="909.0" width="27.9" height="88.2" rx="0"/></clipPath>
<g clip-path="url(#dc4)"><rect x="1096.1" y="907.0" width="31.9" height="92.2" fill="#6a6a6a"/><g filter="url(#th-soft)"><rect x="1098.1" y="909.0" width="27.9" height="24.7" fill="#1c2a1e"/><rect x="1098.1" y="919.6" width="10.6" height="16.8" fill="#2f56a0"/><ellipse cx="1114.8" cy="938.5" rx="14.0" ry="5.3" fill="#b6b8be"/><rect x="1098.1" y="943.4" width="27.9" height="9.7" fill="#4c4c4e"/><polygon points="1098.1,953.1 1117.6,949.6 1126.0,961.9 1126.0,981.3 1098.1,991.0" fill="#cdd8ae"/><polygon points="1098.1,977.8 1126.0,969.0 1126.0,974.3 1098.1,984.0" fill="#e4e8dc"/><rect x="1112.0" y="965.4" width="9.8" height="7.1" fill="#5a5a40"/><polygon points="1098.1,991.0 1126.0,981.3 1126.0,997.2 1098.1,997.2" fill="#8c8c8a"/></g></g>
<path d="M1098.1 997.2H1126.0V1005.8a0 0 0 0 1 0 0H1098.1a0 0 0 0 1 0 0z" fill="#6a6a6a"/><path d="M1098.1 997.2L1098.1 1001.0L1099.6 1000.8L1101.1 1001.3L1102.6 1000.9L1104.1 1000.7L1105.6 1001.3L1107.1 1002.3L1108.6 1002.0L1110.1 1002.0L1111.6 1001.0L1113.1 1001.6L1114.6 1001.1L1116.1 1000.9L1117.6 1000.8L1119.1 1001.0L1120.6 1002.3L1122.1 1002.1L1123.6 1002.1L1125.1 1002.0L1126.0 997.2z" fill="#444444"/>
</g>
<clipPath id="dk5"><rect x="1127.5" y="909" width="35.6" height="96.8" rx="3.2"/></clipPath><g clip-path="url(#dk5)"><clipPath id="dc5"><rect x="1127.5" y="909.0" width="35.6" height="88.2" rx="0"/></clipPath>
<g clip-path="url(#dc5)"><rect x="1125.5" y="907.0" width="39.6" height="92.2" fill="#cfd6de"/><g filter="url(#th-soft)"><polygon points="1131.1,950.5 1163.1,943.4 1163.1,977.8 1131.1,973.4" fill="#3d8cc2"/><polygon points="1131.1,950.5 1163.1,943.4 1163.1,950.5 1131.1,955.7" fill="#c4ccd4"/><ellipse cx="1147.1" cy="963.7" rx="10.7" ry="7.1" fill="#2f6a98"/><rect x="1127.5" y="973.4" width="35.6" height="23.8" fill="#6a6468"/><ellipse cx="1138.9" cy="986.6" rx="10.0" ry="17.6" fill="#1a1a22"/><ellipse cx="1157.8" cy="990.1" rx="5.7" ry="11.5" fill="#2a2a2e"/><rect x="1128.9" y="935.5" width="1.4" height="39.7" fill="#70747a"/></g></g>
<path d="M1127.5 997.2H1163.1V1005.8a0 0 0 0 1 0 0H1127.5a0 0 0 0 1 0 0z" fill="#6a6a6a"/><path d="M1127.5 997.2L1127.5 1001.7L1129.0 1001.9L1130.5 1002.0L1132.0 1002.3L1133.5 1001.9L1135.0 1002.3L1136.5 1000.7L1138.0 1001.4L1139.5 1002.3L1141.0 1001.8L1142.5 1002.2L1144.0 1000.8L1145.5 1001.4L1147.0 1001.0L1148.5 1001.6L1150.0 1001.6L1151.5 1000.6L1153.0 1001.0L1154.5 1001.1L1156.0 1002.2L1157.5 1002.0L1159.0 1000.9L1160.5 1002.0L1162.0 1000.8L1163.1 997.2z" fill="#444444"/>
</g>
<clipPath id="dk6"><rect x="1164.6" y="909" width="42.2" height="96.8" rx="3.2"/></clipPath><g clip-path="url(#dk6)"><clipPath id="dc6"><rect x="1164.6" y="909.0" width="42.2" height="88.2" rx="0"/></clipPath>
<g clip-path="url(#dc6)"><rect x="1162.6" y="907.0" width="46.2" height="92.2" fill="#dcdcda"/><g filter="url(#th-soft)"><polygon points="1177.3,909.0 1189.9,909.0 1183.6,935.5 1177.3,935.5" fill="#c4c4c4"/><polygon points="1179.4,961.9 1206.8,953.1 1206.8,997.2 1177.3,997.2" fill="#a89888"/><ellipse cx="1196.7" cy="981.3" rx="11.4" ry="23.8" fill="#8a6848"/><ellipse cx="1196.7" cy="981.3" rx="5.9" ry="12.3" fill="#a88860"/><polygon points="1164.6,933.7 1183.6,937.2 1185.7,954.9 1164.6,957.5" fill="#c8202e"/><text x="1162.1" y="953.1" font-size="4.2" font-weight="bold" fill="#f4e4e4">HOTEL</text><rect x="1172.2" y="960.2" width="5.1" height="37.0" fill="#1e1e1e"/><ellipse cx="1190.8" cy="953.1" rx="5.1" ry="3.5" fill="#a83040"/><rect x="1164.6" y="958.4" width="7.6" height="38.8" fill="#d0d0ce"/></g></g>
<path d="M1164.6 997.2H1206.8V1005.8a0 0 0 0 1 0 0H1164.6a0 0 0 0 1 0 0z" fill="#6a6a6a"/><path d="M1164.6 997.2L1164.6 1002.0L1166.1 1002.1L1167.6 1001.5L1169.1 1001.1L1170.6 1000.6L1172.1 1001.8L1173.6 1001.4L1175.1 1002.0L1176.6 1001.3L1178.1 1002.0L1179.6 1001.1L1181.1 1002.0L1182.6 1001.9L1184.1 1001.3L1185.6 1001.6L1187.1 1001.8L1188.6 1000.9L1190.1 1001.6L1191.6 1002.0L1193.1 1001.1L1194.6 1002.0L1196.1 1001.8L1197.6 1002.1L1199.1 1001.2L1200.6 1000.8L1202.1 1002.0L1203.6 1002.0L1205.1 1001.4L1206.6 1000.8L1206.8 997.2z" fill="#444444"/>
</g>
<clipPath id="dk7"><rect x="1208.3" y="909" width="30.2" height="96.8" rx="3.2"/></clipPath><g clip-path="url(#dk7)"><clipPath id="dc7"><rect x="1208.3" y="909.0" width="30.2" height="88.2" rx="0"/></clipPath>
<g clip-path="url(#dc7)"><rect x="1206.3" y="907.0" width="34.2" height="92.2" fill="#a89c8e"/><g filter="url(#th-soft)"><rect x="1208.3" y="909.0" width="30.2" height="15.0" fill="#b4a698"/><polygon points="1208.3,924.9 1217.4,924.9 1226.4,963.7 1214.3,963.7" fill="#a0684a"/><polygon points="1214.9,924.9 1217.4,924.9 1227.0,963.7 1224.6,963.7" fill="#dcd0bc"/><polygon points="1208.3,953.1 1224.9,992.8 1224.9,997.2 1208.3,997.2" fill="#e2e2e0"/><polygon points="1218.9,966.3 1229.4,970.7 1234.0,997.2 1226.4,997.2" fill="#8f6248"/><rect x="1227.0" y="963.7" width="11.5" height="33.5" fill="#9c968e"/></g></g>
<path d="M1208.3 997.2H1238.5V1005.8a0 0 0 0 1 0 0H1208.3a0 0 0 0 1 0 0z" fill="#6a6a6a"/><path d="M1208.3 997.2L1208.3 1001.2L1209.8 1000.9L1211.3 1001.8L1212.8 1000.7L1214.3 1001.6L1215.8 1001.3L1217.3 1000.7L1218.8 1001.5L1220.3 1000.7L1221.8 1001.4L1223.3 1000.7L1224.8 1000.8L1226.3 1001.4L1227.8 1002.1L1229.3 1000.8L1230.8 1001.0L1232.3 1001.7L1233.8 1002.3L1235.3 1001.6L1236.8 1001.3L1238.3 1002.4L1238.5 997.2z" fill="#444444"/>
</g>
<clipPath id="dk8"><rect x="1240.2" y="909" width="38.7" height="96.8" rx="3.2"/></clipPath><g clip-path="url(#dk8)"><clipPath id="dc8"><rect x="1240.2" y="909.0" width="38.7" height="88.2" rx="0"/></clipPath>
<g clip-path="url(#dc8)"><rect x="1238.2" y="907.0" width="42.7" height="92.2" fill="#4d7a3e"/><g filter="url(#th-soft)"><ellipse cx="1263.4" cy="935.5" rx="15.5" ry="22.1" fill="#6e9c54"/><ellipse cx="1251.8" cy="961.9" rx="11.6" ry="17.6" fill="#5c8a48"/><ellipse cx="1269.2" cy="963.7" rx="9.7" ry="13.2" fill="#7aa860"/><ellipse cx="1247.9" cy="985.7" rx="7.7" ry="13.2" fill="#2a3a24"/><ellipse cx="1271.2" cy="990.1" rx="11.6" ry="10.6" fill="#3f6a36"/><rect x="1240.2" y="909.0" width="3.1" height="52.9" fill="#8a8a80" opacity="0.7"/></g></g>
<path d="M1240.2 997.2H1278.9V1005.8a0 0 0 0 1 0 0H1240.2a0 0 0 0 1 0 0z" fill="#6a6a6a"/><path d="M1240.2 997.2L1240.2 1001.0L1241.7 1002.3L1243.2 1000.8L1244.7 1001.9L1246.2 1000.8L1247.7 1001.0L1249.2 1002.4L1250.7 1001.0L1252.2 1001.8L1253.7 1001.4L1255.2 1001.4L1256.7 1001.5L1258.2 1000.9L1259.7 1002.1L1261.2 1000.8L1262.7 1001.0L1264.2 1000.6L1265.7 1001.1L1267.2 1001.3L1268.7 1002.2L1270.2 1001.3L1271.7 1000.8L1273.2 1001.1L1274.7 1002.4L1276.2 1000.7L1277.7 1001.7L1278.9 997.2z" fill="#444444"/>
</g>
<clipPath id="dk9"><rect x="1280.0" y="909" width="39.1" height="96.8" rx="3.2"/></clipPath><g clip-path="url(#dk9)"><clipPath id="dc9"><rect x="1280.0" y="909.0" width="39.1" height="88.2" rx="0"/></clipPath>
<g clip-path="url(#dc9)"><rect x="1278.0" y="907.0" width="43.1" height="92.2" fill="#c4c8d0"/><g filter="url(#th-soft)"><polygon points="1280.0,926.6 1319.1,948.7 1319.1,997.2 1280.0,997.2" fill="#a05a50"/><polygon points="1280.0,923.1 1319.1,946.9 1319.1,950.5 1280.0,927.5" fill="#2a2c30"/><polygon points="1280.0,954.9 1311.3,961.9 1311.3,981.3 1280.0,976.0" fill="#b4acb4"/><ellipse cx="1297.6" cy="964.6" rx="7.8" ry="4.4" fill="#c8a860"/><ellipse cx="1293.7" cy="991.0" rx="17.6" ry="14.1" fill="#2e4a30"/><ellipse cx="1314.4" cy="993.7" rx="5.9" ry="8.8" fill="#2a8a90"/><rect x="1311.3" y="957.5" width="7.8" height="26.5" fill="#9c9c9a"/></g></g>
<path d="M1280.0 997.2H1319.1V1005.8a0 0 0 0 1 0 0H1280.0a0 0 0 0 1 0 0z" fill="#6a6a6a"/><path d="M1280.0 997.2L1280.0 1001.4L1281.5 1001.3L1283.0 1000.8L1284.5 1002.2L1286.0 1000.6L1287.5 1001.5L1289.0 1002.2L1290.5 1000.7L1292.0 1001.6L1293.5 1001.7L1295.0 1000.7L1296.5 1001.3L1298.0 1001.9L1299.5 1001.4L1301.0 1001.9L1302.5 1000.9L1304.0 1001.0L1305.5 1000.8L1307.0 1001.5L1308.5 1002.3L1310.0 1001.7L1311.5 1002.0L1313.0 1001.3L1314.5 1001.9L1316.0 1000.8L1317.5 1001.1L1319.0 1001.8L1319.1 997.2z" fill="#444444"/>
</g>
<clipPath id="dk10"><rect x="1320.8" y="909" width="24.2" height="96.8" rx="3.2"/></clipPath><g clip-path="url(#dk10)"><clipPath id="dc10"><rect x="1320.8" y="909.0" width="24.2" height="88.2" rx="0"/></clipPath>
<g clip-path="url(#dc10)"><rect x="1318.8" y="907.0" width="28.2" height="92.2" fill="#d8dadc"/><g filter="url(#th-soft)"><polygon points="1320.8,935.5 1345.0,939.0 1345.0,942.5 1320.8,938.1" fill="#b8babd"/><polygon points="1320.8,917.8 1335.3,909.0 1345.0,922.2 1345.0,926.6" fill="#c4c6ca"/><ellipse cx="1328.1" cy="984.0" rx="8.5" ry="13.2" fill="#8a5a78"/><ellipse cx="1338.2" cy="990.1" rx="7.3" ry="8.8" fill="#6a7a4a"/></g></g>
<path d="M1320.8 997.2H1345.0V1005.8a0 0 0 0 1 0 0H1320.8a0 0 0 0 1 0 0z" fill="#6a6a6a"/><path d="M1320.8 997.2L1320.8 1001.6L1322.3 1001.4L1323.8 1001.6L1325.3 1001.0L1326.8 1002.1L1328.3 1002.1L1329.8 1001.8L1331.3 1000.9L1332.8 1001.5L1334.3 1001.2L1335.8 1001.0L1337.3 1002.3L1338.8 1002.4L1340.3 1000.7L1341.8 1002.1L1343.3 1001.7L1344.8 1001.3L1345.0 997.2z" fill="#444444"/>
</g>
<clipPath id="dk11"><rect x="1346.1" y="909" width="25.8" height="96.8" rx="3.2"/></clipPath><g clip-path="url(#dk11)"><clipPath id="dc11"><rect x="1346.1" y="909.0" width="25.8" height="88.2" rx="0"/></clipPath>
<g clip-path="url(#dc11)"><rect x="1344.1" y="907.0" width="29.8" height="92.2" fill="#b8ae9e"/><g filter="url(#th-soft)"><rect x="1359.0" y="909.0" width="12.9" height="39.7" fill="#d0ccc0"/><ellipse cx="1353.8" cy="922.2" rx="8.3" ry="8.8" fill="#8a8a5a"/><ellipse cx="1356.4" cy="935.5" rx="5.7" ry="7.5" fill="#2a2624"/><polygon points="1346.1,944.3 1366.7,942.5 1369.3,984.0 1346.1,984.0" fill="#3a3c42"/><rect x="1346.1" y="984.0" width="16.0" height="13.2" fill="#1e2026"/><rect x="1362.1" y="957.5" width="9.8" height="39.7" fill="#b0a898"/></g></g>
<path d="M1346.1 997.2H1371.9V1005.8a0 0 0 0 1 0 0H1346.1a0 0 0 0 1 0 0z" fill="#6a6a6a"/><path d="M1346.1 997.2L1346.1 1001.4L1347.6 1001.6L1349.1 1002.3L1350.6 1001.4L1352.1 1001.5L1353.6 1001.7L1355.1 1000.9L1356.6 1001.5L1358.1 1001.7L1359.6 1002.0L1361.1 1000.8L1362.6 1001.1L1364.1 1000.8L1365.6 1002.1L1367.1 1001.8L1368.6 1000.7L1370.1 1002.4L1371.6 1002.3L1371.9 997.2z" fill="#444444"/>
</g>
<clipPath id="dk12"><rect x="1373.0" y="909" width="36.6" height="96.8" rx="3.2"/></clipPath><g clip-path="url(#dk12)"><clipPath id="dc12"><rect x="1373.0" y="909.0" width="36.6" height="88.2" rx="0"/></clipPath>
<g clip-path="url(#dc12)"><rect x="1371.0" y="907.0" width="40.6" height="92.2" fill="#a49c90"/><g filter="url(#th-soft)"><rect x="1373.0" y="909.0" width="36.6" height="17.6" fill="#9cb0c4"/><ellipse cx="1380.3" cy="917.8" rx="9.1" ry="12.3" fill="#4a5a48"/><ellipse cx="1400.4" cy="919.6" rx="7.3" ry="7.1" fill="#56664e"/><rect x="1385.8" y="926.6" width="23.8" height="30.9" fill="#6c6c6a"/><rect x="1376.7" y="957.5" width="32.9" height="11.5" fill="#3a3a38"/><rect x="1398.6" y="942.5" width="5.5" height="6.2" fill="#d8d8d8"/><polyline points="1373.0,946.0 1400.4,909.0" fill="none" stroke="#4a3e34" stroke-width="1.3"/><polyline points="1393.1,909.0 1409.6,933.7" fill="none" stroke="#4a3e34" stroke-width="1.3"/><polyline points="1373.0,913.4 1409.6,963.7" fill="none" stroke="#4a3e34" stroke-width="1.3"/><polyline points="1373.0,979.6 1409.6,931.0" fill="none" stroke="#4a3e34" stroke-width="1.3"/><polyline points="1373.0,972.5 1405.9,997.2" fill="none" stroke="#4a3e34" stroke-width="1.3"/><polyline points="1384.0,997.2 1409.6,961.9" fill="none" stroke="#4a3e34" stroke-width="1.3"/><rect x="1384.0" y="991.0" width="18.3" height="2.6" fill="#d8d4cc" opacity="0.8"/></g></g>
<path d="M1373.0 997.2H1409.6V1005.8a0 0 0 0 1 0 0H1373.0a0 0 0 0 1 0 0z" fill="#6a6a6a"/><path d="M1373.0 997.2L1373.0 1001.5L1374.5 1001.8L1376.0 1001.8L1377.5 1000.9L1379.0 1000.6L1380.5 1001.3L1382.0 1001.1L1383.5 1002.1L1385.0 1001.8L1386.5 1001.7L1388.0 1001.6L1389.5 1001.8L1391.0 1000.9L1392.5 1001.4L1394.0 1000.9L1395.5 1002.2L1397.0 1000.7L1398.5 1002.1L1400.0 1000.7L1401.5 1001.8L1403.0 1001.2L1404.5 1001.3L1406.0 1002.1L1407.5 1000.6L1409.0 1000.7L1409.6 997.2z" fill="#444444"/>
</g>
<clipPath id="dk13"><rect x="1410.8" y="909" width="29.0" height="96.8" rx="3.2"/></clipPath><g clip-path="url(#dk13)"><clipPath id="dc13"><rect x="1410.8" y="909.0" width="29.0" height="88.2" rx="0"/></clipPath>
<g clip-path="url(#dc13)"><rect x="1408.8" y="907.0" width="33.0" height="92.2" fill="#a89e94"/><g filter="url(#th-soft)"><rect x="1410.8" y="909.0" width="29.0" height="19.4" fill="#4a3a34"/><rect x="1423.8" y="924.9" width="16.0" height="10.6" fill="#d8d4d0"/><ellipse cx="1416.6" cy="931.9" rx="3.5" ry="4.0" fill="#3a2a24"/><polygon points="1412.2,937.2 1423.8,935.5 1425.3,959.3 1413.7,961.9" fill="#9a98d0"/><rect x="1413.7" y="960.2" width="8.7" height="30.0" fill="#2a2a30"/><ellipse cx="1429.9" cy="940.8" rx="5.8" ry="6.6" fill="#1a1a1c"/><polygon points="1423.8,948.7 1439.8,946.0 1439.8,997.2 1426.8,997.2" fill="#1c1c22"/><rect x="1419.5" y="953.1" width="5.8" height="5.3" fill="#e8e8ec"/></g></g>
<path d="M1410.8 997.2H1439.8V1005.8a0 0 0 0 1 0 0H1410.8a0 0 0 0 1 0 0z" fill="#6a6a6a"/><path d="M1410.8 997.2L1410.8 1001.1L1412.3 1001.8L1413.8 1001.8L1415.3 1002.1L1416.8 1000.9L1418.3 1001.0L1419.8 1000.9L1421.3 1001.0L1422.8 1001.9L1424.3 1000.8L1425.8 1001.6L1427.3 1001.0L1428.8 1001.1L1430.3 1001.4L1431.8 1002.1L1433.3 1001.7L1434.8 1000.6L1436.3 1001.1L1437.8 1000.9L1439.3 1002.2L1439.8 997.2z" fill="#444444"/>
</g>
<clipPath id="dk14"><rect x="1441.3" y="909" width="24.0" height="96.8" rx="3.2"/></clipPath><g clip-path="url(#dk14)"><clipPath id="dc14"><rect x="1441.3" y="909.0" width="24.0" height="88.2" rx="0"/></clipPath>
<g clip-path="url(#dc14)"><rect x="1439.3" y="907.0" width="28.0" height="92.2" fill="#e4e8ec"/><g filter="url(#th-soft)"><ellipse cx="1453.3" cy="926.6" rx="10.8" ry="10.6" fill="#b8c0c8"/><polygon points="1441.3,953.1 1465.3,946.0 1465.3,997.2 1441.3,997.2" fill="#a8a8a0"/><rect x="1447.3" y="957.5" width="3.6" height="6.2" fill="#4a4a48"/><rect x="1448.5" y="969.0" width="3.6" height="7.1" fill="#4a4a48"/><rect x="1441.3" y="976.0" width="7.2" height="21.2" fill="#5a5a58"/><polygon points="1448.5,997.2 1465.3,972.5 1465.3,997.2" fill="#3a9aa0"/></g></g>
<path d="M1441.3 997.2H1465.3V1005.8a0 0 0 0 1 0 0H1441.3a0 0 0 0 1 0 0z" fill="#6a6a6a"/><path d="M1441.3 997.2L1441.3 1000.8L1442.8 1001.9L1444.3 1001.8L1445.8 1002.3L1447.3 1001.1L1448.8 1001.1L1450.3 1001.9L1451.8 1001.8L1453.3 1001.1L1454.8 1001.8L1456.3 1001.3L1457.8 1002.0L1459.3 1000.8L1460.8 1001.0L1462.3 1002.2L1463.8 1001.2L1465.3 997.2z" fill="#444444"/>
</g>
<clipPath id="dk15"><rect x="1466.8" y="909" width="21.1" height="96.8" rx="3.2"/></clipPath><g clip-path="url(#dk15)"><clipPath id="dc15"><rect x="1466.8" y="909.0" width="21.1" height="88.2" rx="0"/></clipPath>
<g clip-path="url(#dc15)"><rect x="1464.8" y="907.0" width="25.1" height="92.2" fill="#3fa6a8"/><g filter="url(#th-soft)"><rect x="1466.8" y="909.0" width="21.1" height="26.5" fill="#7cc8c8"/><ellipse cx="1475.2" cy="948.7" rx="6.3" ry="10.6" fill="#58b8b8"/><rect x="1481.6" y="948.7" width="6.3" height="26.5" fill="#5a6a68"/><polygon points="1468.9,981.3 1487.9,977.8 1487.9,992.8 1468.9,992.8" fill="#2238a0"/><rect x="1466.8" y="992.8" width="21.1" height="4.4" fill="#5a5a60"/><rect x="1466.8" y="979.6" width="2.1" height="17.6" fill="#c8c0b8"/></g></g>
<path d="M1466.8 997.2H1487.9V1005.8a0 0 0 0 1 0 0H1466.8a0 0 0 0 1 0 0z" fill="#6a6a6a"/><path d="M1466.8 997.2L1466.8 1002.3L1468.3 1000.6L1469.8 1001.9L1471.3 1000.9L1472.8 1002.4L1474.3 1000.6L1475.8 1002.2L1477.3 1001.8L1478.8 1002.1L1480.3 1002.4L1481.8 1001.0L1483.3 1001.2L1484.8 1001.9L1486.3 1001.1L1487.8 1001.1L1487.9 997.2z" fill="#444444"/>
</g>
<clipPath id="dk16"><rect x="1489.3" y="909" width="28.6" height="96.8" rx="3.2"/></clipPath><g clip-path="url(#dk16)"><clipPath id="dc16"><rect x="1489.3" y="909.0" width="28.6" height="88.2" rx="0"/></clipPath>
<g clip-path="url(#dc16)"><rect x="1487.3" y="907.0" width="32.6" height="92.2" fill="#d4d8dc"/><g filter="url(#th-soft)"><ellipse cx="1500.7" cy="935.5" rx="12.9" ry="13.2" fill="#b4bac2"/><ellipse cx="1509.3" cy="961.9" rx="8.6" ry="8.8" fill="#c0c4cc"/><ellipse cx="1497.9" cy="916.1" rx="11.4" ry="7.1" fill="#eceef0"/><rect x="1489.3" y="984.0" width="28.6" height="13.2" fill="#5a4a44"/><rect x="1489.3" y="972.5" width="7.2" height="13.2" fill="#b0a8a0"/><ellipse cx="1515.0" cy="981.3" rx="4.0" ry="8.8" fill="#4a5a40"/></g></g>
<path d="M1489.3 997.2H1517.9V1005.8a0 0 0 0 1 0 0H1489.3a0 0 0 0 1 0 0z" fill="#6a6a6a"/><path d="M1489.3 997.2L1489.3 1001.3L1490.8 1001.5L1492.3 1001.4L1493.8 1001.4L1495.3 1001.3L1496.8 1001.8L1498.3 1001.1L1499.8 1001.7L1501.3 1000.6L1502.8 1001.1L1504.3 1001.2L1505.8 1000.9L1507.3 1001.9L1508.8 1001.2L1510.3 1002.0L1511.8 1002.3L1513.3 1001.1L1514.8 1002.2L1516.3 1002.1L1517.8 1001.8L1517.9 997.2z" fill="#444444"/>
</g>
<clipPath id="dk17"><rect x="1519.2" y="909" width="28.4" height="96.8" rx="3.2"/></clipPath><g clip-path="url(#dk17)"><clipPath id="dc17"><rect x="1519.2" y="909.0" width="28.4" height="88.2" rx="0"/></clipPath>
<g clip-path="url(#dc17)"><rect x="1517.2" y="907.0" width="32.4" height="92.2" fill="#c8ccd0"/><g filter="url(#th-soft)"><rect x="1519.2" y="909.0" width="4.3" height="88.2" fill="#b0b8c0"/><polygon points="1532.0,928.4 1547.6,935.5 1547.6,953.1 1532.0,953.1" fill="#d8c070"/><rect x="1531.1" y="955.7" width="16.5" height="41.5" fill="#a8aaa8"/><ellipse cx="1539.1" cy="979.6" rx="5.7" ry="13.2" fill="#8c9490"/><rect x="1519.2" y="953.1" width="28.4" height="2.6" fill="#3a3a38"/><rect x="1523.5" y="909.0" width="7.7" height="88.2" fill="#2c2c28"/><rect x="1531.1" y="909.0" width="1.7" height="88.2" fill="#d0d0cc"/><rect x="1519.2" y="979.6" width="4.3" height="17.6" fill="#3a4a38"/></g></g>
<path d="M1519.2 997.2H1547.6V1005.8a0 0 0 0 1 0 0H1519.2a0 0 0 0 1 0 0z" fill="#6a6a6a"/><path d="M1519.2 997.2L1519.2 1001.5L1520.7 1002.1L1522.2 1002.3L1523.7 1001.1L1525.2 1002.0L1526.7 1001.9L1528.2 1001.8L1529.7 1000.8L1531.2 1000.6L1532.7 1001.3L1534.2 1001.9L1535.7 1001.1L1537.2 1001.5L1538.7 1001.2L1540.2 1002.1L1541.7 1002.3L1543.2 1001.3L1544.7 1002.4L1546.2 1000.7L1547.6 997.2z" fill="#444444"/>
</g>
<clipPath id="dk18"><rect x="1548.9" y="909" width="36.6" height="96.8" rx="3.2"/></clipPath><g clip-path="url(#dk18)"><clipPath id="dc18"><rect x="1548.9" y="909.0" width="36.6" height="88.2" rx="0"/></clipPath>
<g clip-path="url(#dc18)"><rect x="1546.9" y="907.0" width="40.6" height="92.2" fill="#3f68c8"/><g filter="url(#th-soft)"><polygon points="1548.9,909.0 1559.9,909.0 1558.1,961.9 1548.9,966.3" fill="#8a3a8a"/><rect x="1569.0" y="909.0" width="3.7" height="35.3" fill="#a040a0"/><rect x="1548.9" y="944.3" width="36.6" height="1.8" fill="#d070c0"/><rect x="1574.5" y="909.0" width="1.1" height="88.2" fill="#90b8f0"/><ellipse cx="1563.5" cy="984.0" rx="9.1" ry="8.8" fill="#30a8d8"/><ellipse cx="1552.6" cy="963.7" rx="5.5" ry="7.1" fill="#6a4a3a"/><polygon points="1548.9,975.2 1569.0,979.6 1570.9,997.2 1548.9,997.2" fill="#8a3a48"/><polygon points="1565.4,988.4 1575.3,961.9 1580.0,966.3 1574.5,997.2 1565.4,997.2" fill="#d09a80"/><rect x="1569.0" y="957.5" width="4.0" height="11.5" fill="#1a1a20"/><ellipse cx="1581.8" cy="965.4" rx="2.9" ry="4.4" fill="#c8a868"/><rect x="1578.2" y="972.5" width="7.3" height="20.3" fill="#1e1e24"/></g></g>
<path d="M1548.9 997.2H1585.5V1005.8a0 0 0 0 1 0 0H1548.9a0 0 0 0 1 0 0z" fill="#6a6a6a"/><path d="M1548.9 997.2L1548.9 1000.9L1550.4 1001.8L1551.9 1001.2L1553.4 1001.0L1554.9 1001.5L1556.4 1001.5L1557.9 1001.5L1559.4 1001.4L1560.9 1001.1L1562.4 1001.1L1563.9 1001.8L1565.4 1001.2L1566.9 1001.8L1568.4 1002.0L1569.9 1002.2L1571.4 1002.3L1572.9 1001.0L1574.4 1001.0L1575.9 1001.9L1577.4 1001.6L1578.9 1001.0L1580.4 1001.8L1581.9 1002.2L1583.4 1002.1L1584.9 1001.0L1585.5 997.2z" fill="#444444"/>
</g>
<clipPath id="dk19"><rect x="1587.2" y="909" width="24.2" height="96.8" rx="3.2"/></clipPath><g clip-path="url(#dk19)"><clipPath id="dc19"><rect x="1587.2" y="909.0" width="24.2" height="88.2" rx="0"/></clipPath>
<g clip-path="url(#dc19)"><rect x="1585.2" y="907.0" width="28.2" height="92.2" fill="#5a78e0"/><g filter="url(#th-soft)"><polygon points="1587.2,909.0 1611.4,909.0 1611.4,926.6 1587.2,944.3" fill="#6a98e8"/><polygon points="1587.2,970.7 1611.4,953.1 1611.4,997.2 1587.2,997.2" fill="#7a68d8"/><ellipse cx="1599.3" cy="948.7" rx="7.3" ry="13.2" fill="#88a8f0"/><ellipse cx="1596.9" cy="919.6" rx="7.3" ry="5.3" fill="#a0c0f4"/><polyline points="1587.2,988.4 1611.4,979.6" fill="none" stroke="#9aa0f0" stroke-width="1"/></g></g>
<path d="M1587.2 997.2H1611.4V1005.8a0 0 0 0 1 0 0H1587.2a0 0 0 0 1 0 0z" fill="#6a6a6a"/><path d="M1587.2 997.2L1587.2 1001.8L1588.7 1002.0L1590.2 1001.5L1591.7 1001.5L1593.2 1001.3L1594.7 1002.4L1596.2 1001.1L1597.7 1000.9L1599.2 1001.1L1600.7 1001.1L1602.2 1001.2L1603.7 1001.1L1605.2 1000.8L1606.7 1001.2L1608.2 1001.2L1609.7 1001.6L1611.2 1001.0L1611.4 997.2z" fill="#444444"/>
</g>
<clipPath id="dk20"><rect x="1613.0" y="909" width="22.7" height="96.8" rx="3.2"/></clipPath><g clip-path="url(#dk20)"><clipPath id="dc20"><rect x="1613.0" y="909.0" width="22.7" height="88.2" rx="0"/></clipPath>
<g clip-path="url(#dc20)"><rect x="1611.0" y="907.0" width="26.7" height="92.2" fill="#d0d4da"/><g filter="url(#th-soft)"><ellipse cx="1624.3" cy="926.6" rx="9.1" ry="13.2" fill="#b0b6c0"/><ellipse cx="1619.8" cy="948.7" rx="9.1" ry="13.2" fill="#eceef0"/><ellipse cx="1628.9" cy="957.5" rx="6.8" ry="8.8" fill="#c0c6ce"/><polygon points="1616.4,997.2 1624.3,967.2 1635.7,970.7 1635.7,997.2" fill="#3a4238"/><ellipse cx="1624.3" cy="977.8" rx="4.5" ry="7.1" fill="#8a9290"/></g></g>
<path d="M1613.0 997.2H1635.7V1005.8a0 0 0 0 1 0 0H1613.0a0 0 0 0 1 0 0z" fill="#6a6a6a"/><path d="M1613.0 997.2L1613.0 1002.2L1614.5 1001.8L1616.0 1002.0L1617.5 1002.2L1619.0 1001.1L1620.5 1001.7L1622.0 1002.2L1623.5 1002.2L1625.0 1001.6L1626.5 1000.9L1628.0 1001.3L1629.5 1002.4L1631.0 1000.8L1632.5 1001.2L1634.0 1002.3L1635.5 1001.4L1635.7 997.2z" fill="#444444"/>
</g>
<clipPath id="dk21"><rect x="1637.4" y="909" width="29.0" height="96.8" rx="3.2"/></clipPath><g clip-path="url(#dk21)"><clipPath id="dc21"><rect x="1637.4" y="909.0" width="29.0" height="88.2" rx="0"/></clipPath>
<g clip-path="url(#dc21)"><rect x="1635.4" y="907.0" width="33.0" height="92.2" fill="#e8eaec"/><g filter="url(#th-soft)"><ellipse cx="1651.9" cy="937.2" rx="16.0" ry="14.1" fill="#9aa2ac"/><ellipse cx="1649.0" cy="919.6" rx="11.6" ry="7.1" fill="#f4f4f6"/><rect x="1637.4" y="957.5" width="29.0" height="35.3" fill="#6a2434"/><rect x="1637.4" y="957.5" width="29.0" height="2.6" fill="#4a2028"/><ellipse cx="1657.7" cy="986.6" rx="8.7" ry="6.2" fill="#2a3a70"/><rect x="1637.4" y="992.8" width="29.0" height="4.4" fill="#b0b0b0"/><rect x="1640.3" y="969.0" width="8.7" height="15.0" fill="#3a3a58"/></g></g>
<path d="M1637.4 997.2H1666.4V1005.8a0 0 0 0 1 0 0H1637.4a0 0 0 0 1 0 0z" fill="#6a6a6a"/><path d="M1637.4 997.2L1637.4 1000.9L1638.9 1001.8L1640.4 1001.7L1641.9 1001.5L1643.4 1001.0L1644.9 1002.0L1646.4 1002.1L1647.9 1001.5L1649.4 1001.5L1650.9 1001.0L1652.4 1000.6L1653.9 1001.3L1655.4 1001.7L1656.9 1000.7L1658.4 1002.0L1659.9 1001.0L1661.4 1001.0L1662.9 1000.7L1664.4 1002.4L1665.9 1001.9L1666.4 997.2z" fill="#444444"/>
</g>
<clipPath id="dk22"><rect x="1668.0" y="909" width="27.5" height="96.8" rx="3.2"/></clipPath><g clip-path="url(#dk22)"><clipPath id="dc22"><rect x="1668.0" y="909.0" width="27.5" height="88.2" rx="0"/></clipPath>
<g clip-path="url(#dc22)"><rect x="1666.0" y="907.0" width="31.5" height="92.2" fill="#141414"/><g filter="url(#th-soft)"><rect x="1668.0" y="909.0" width="6.9" height="13.2" fill="#4a7ad0"/><polygon points="1677.6,935.5 1695.5,931.0 1695.5,975.2 1677.6,979.6" fill="#5a8a50"/><polygon points="1681.8,953.1 1692.8,948.7 1690.0,970.7" fill="#c8b040"/><polygon points="1677.6,939.9 1684.5,935.5 1683.1,961.9" fill="#b04838"/><polygon points="1684.5,931.0 1695.5,931.0 1695.5,948.7" fill="#3a6ab0"/><ellipse cx="1676.2" cy="981.3" rx="6.9" ry="8.8" fill="#2a1c18"/><ellipse cx="1690.0" cy="984.0" rx="4.1" ry="10.6" fill="#1c1410"/><polygon points="1690.0,909.0 1695.5,909.0 1695.5,916.1" fill="#d0d0d0"/></g></g>
<path d="M1668.0 997.2H1695.5V1005.8a0 0 0 0 1 0 0H1668.0a0 0 0 0 1 0 0z" fill="#6a6a6a"/><path d="M1668.0 997.2L1668.0 1002.3L1669.5 1000.9L1671.0 1000.6L1672.5 1002.4L1674.0 1000.9L1675.5 1000.8L1677.0 1001.8L1678.5 1001.2L1680.0 1002.2L1681.5 1001.0L1683.0 1002.3L1684.5 1001.2L1686.0 1001.7L1687.5 1002.3L1689.0 1001.8L1690.5 1002.3L1692.0 1001.9L1693.5 1000.7L1695.0 1002.2L1695.5 997.2z" fill="#444444"/>
</g>
<rect x="1696.8" y="909" width="29.7" height="97.3" rx="4.5" fill="#f09a28"/><rect x="1701.4" y="913.6" width="20.5" height="88" rx="1.5" fill="#3a3a3a"/><clipPath id="dc23"><rect x="1701.4" y="913.6" width="20.5" height="83.6" rx="1.5"/></clipPath>
<g clip-path="url(#dc23)"><rect x="1699.4" y="911.6" width="24.5" height="87.6" fill="#5a98e0"/><g filter="url(#th-soft)"><polygon points="1701.4,913.6 1721.9,913.6 1721.9,922.0 1701.4,948.7" fill="#3a68cc"/><polygon points="1701.4,948.7 1721.9,922.0 1721.9,938.7 1701.4,960.4" fill="#a8c8f0"/><polygon points="1701.4,960.4 1721.9,938.7 1721.9,963.8 1701.4,976.3" fill="#6a9ce0"/><rect x="1701.4" y="976.3" width="20.5" height="20.9" fill="#4a90dc"/><rect x="1701.4" y="988.8" width="8.2" height="8.4" fill="#d0d8e8"/></g></g>
<rect x="1701.4" y="997.2" width="20.5" height="4.4" fill="#5a5a5a"/>
<clipPath id="dk24"><rect x="1727.8" y="909" width="27.7" height="96.8" rx="3.2"/></clipPath><g clip-path="url(#dk24)"><clipPath id="dc24"><rect x="1727.8" y="909.0" width="27.7" height="88.2" rx="0"/></clipPath>
<g clip-path="url(#dc24)"><rect x="1725.8" y="907.0" width="31.7" height="92.2" fill="#4a5a48"/><g filter="url(#th-soft)"><rect x="1727.8" y="909.0" width="8.3" height="13.2" fill="#3a8a90"/><rect x="1733.3" y="913.4" width="22.2" height="23.8" fill="#8a9088"/><ellipse cx="1736.1" cy="931.0" rx="6.9" ry="8.8" fill="#3a4a38"/><ellipse cx="1745.0" cy="939.9" rx="4.2" ry="7.1" fill="#2a2a28"/><rect x="1727.8" y="948.7" width="27.7" height="11.5" fill="#a0a49c"/><rect x="1736.1" y="960.2" width="2.2" height="19.4" fill="#b0b4ac"/><rect x="1747.2" y="960.2" width="1.7" height="19.4" fill="#b0b4ac"/><ellipse cx="1738.9" cy="986.6" rx="15.2" ry="17.6" fill="#26382a"/></g></g>
<path d="M1727.8 997.2H1755.5V1005.8a0 0 0 0 1 0 0H1727.8a0 0 0 0 1 0 0z" fill="#6a6a6a"/><path d="M1727.8 997.2L1727.8 1001.9L1729.3 1002.1L1730.8 1000.9L1732.3 1002.4L1733.8 1000.9L1735.3 1001.8L1736.8 1000.8L1738.3 1002.0L1739.8 1000.9L1741.3 1001.9L1742.8 1001.9L1744.3 1002.0L1745.8 1001.4L1747.3 1002.2L1748.8 1002.4L1750.3 1000.8L1751.8 1001.5L1753.3 1002.3L1754.8 1001.9L1755.5 997.2z" fill="#444444"/>
</g>
<clipPath id="dk25"><rect x="1757.1" y="909" width="71.3" height="96.8" rx="3.2"/></clipPath><g clip-path="url(#dk25)"><clipPath id="dc25"><rect x="1757.1" y="909.0" width="71.3" height="88.2" rx="0"/></clipPath>
<g clip-path="url(#dc25)"><rect x="1755.1" y="907.0" width="75.3" height="92.2" fill="#7a7a80"/><g filter="url(#th-soft)"><rect x="1757.1" y="909.0" width="71.3" height="19.4" fill="#e0e4e8"/><ellipse cx="1778.5" cy="914.3" rx="21.4" ry="6.2" fill="#a8b0b8"/><rect x="1814.1" y="919.6" width="14.3" height="33.5" fill="#8c9098"/><polygon points="1757.1,922.2 1801.3,931.9 1801.3,957.5 1757.1,961.9" fill="#3a7ab8"/><ellipse cx="1769.9" cy="946.0" rx="10.0" ry="13.2" fill="#4aa880"/><ellipse cx="1785.6" cy="944.3" rx="8.6" ry="8.8" fill="#3a68b0"/><ellipse cx="1762.8" cy="935.5" rx="5.7" ry="7.1" fill="#2a9ab0"/><ellipse cx="1794.2" cy="950.5" rx="5.7" ry="5.3" fill="#58b0a0"/><rect x="1801.3" y="931.0" width="15.7" height="22.1" fill="#3a4048"/><ellipse cx="1808.4" cy="946.0" rx="7.1" ry="4.4" fill="#c8c040"/><polygon points="1757.1,961.9 1828.4,953.1 1828.4,997.2 1757.1,997.2" fill="#77777d"/><ellipse cx="1801.3" cy="954.9" rx="7.1" ry="5.3" fill="#2a2420"/><ellipse cx="1801.3" cy="961.9" rx="7.1" ry="2.6" fill="#2a5a9a"/><ellipse cx="1799.9" cy="979.6" rx="19.3" ry="22.1" fill="#1e2026"/><rect x="1812.7" y="958.4" width="5.7" height="10.6" fill="#e0e0e0"/><ellipse cx="1799.9" cy="977.8" rx="8.6" ry="8.8" fill="none" stroke="#c8c8c8" stroke-width="2"/><rect x="1818.4" y="928.4" width="10.0" height="61.7" fill="#9a9a9a" opacity="0.55"/></g></g>
<path d="M1757.1 997.2H1828.4V1005.8a0 0 0 0 1 0 0H1757.1a0 0 0 0 1 0 0z" fill="#6a6a6a"/><path d="M1757.1 997.2L1757.1 1001.3L1758.6 1002.3L1760.1 1002.1L1761.6 1001.0L1763.1 1002.2L1764.6 1001.7L1766.1 1000.7L1767.6 1002.3L1769.1 1001.1L1770.6 1001.2L1772.1 1001.4L1773.6 1001.7L1775.1 1000.8L1776.6 1001.8L1778.1 1002.1L1779.6 1001.5L1781.1 1002.0L1782.6 1001.7L1784.1 1002.1L1785.6 1000.9L1787.1 1001.2L1788.6 1001.4L1790.1 1000.8L1791.6 1002.4L1793.1 1001.7L1794.6 1000.8L1796.1 1001.6L1797.6 1001.3L1799.1 1000.9L1800.6 1000.9L1802.1 1001.4L1803.6 1000.7L1805.1 1001.6L1806.6 1001.5L1808.1 1000.8L1809.6 1002.2L1811.1 1000.7L1812.6 1000.9L1814.1 1002.1L1815.6 1001.0L1817.1 1001.4L1818.6 1001.6L1820.1 1001.4L1821.6 1001.5L1823.1 1001.5L1824.6 1001.5L1826.1 1000.7L1827.6 1002.1L1828.4 997.2z" fill="#444444"/>
</g>
<rect x="992.7" y="1013.1" width="835.6" height="36.0" fill="#1a7f60" rx="4"/>
<path d="M992.7 1045.1V1037.2L992.7 1037.2L994.2 1036.1L995.7 1036.3L997.2 1037.9L998.7 1036.1L1000.2 1039.0L1001.7 1038.1L1003.2 1038.3L1004.7 1034.0L1006.2 1035.7L1007.7 1038.5L1009.2 1038.2L1010.7 1038.9L1012.2 1039.4L1013.7 1037.2L1015.2 1037.4L1016.7 1037.0L1018.2 1038.1L1019.7 1033.7L1021.2 1034.7L1022.7 1037.5L1024.2 1038.5L1025.7 1036.9L1027.2 1036.2L1028.7 1033.8L1030.2 1038.4L1031.7 1036.3L1033.2 1035.5L1034.7 1037.2L1036.2 1037.1L1037.7 1038.6L1039.2 1035.3L1040.7 1038.5L1042.2 1039.6L1043.7 1037.8L1045.2 1037.2L1046.7 1037.3L1048.2 1038.4L1049.7 1039.5L1051.2 1039.7L1052.7 1035.6L1054.2 1036.1L1055.7 1038.7L1057.2 1036.2L1058.7 1036.2L1060.2 1039.2L1061.7 1037.5L1063.2 1038.6L1064.7 1038.6L1066.2 1038.6L1067.7 1038.6L1069.2 1036.5L1070.7 1035.2L1072.2 1038.6L1073.7 1035.1L1075.2 1038.2L1076.7 1034.8L1078.2 1036.1L1079.7 1036.1L1081.2 1037.8L1082.7 1036.7L1084.2 1038.1L1085.7 1037.6L1087.2 1038.2L1088.7 1037.8L1090.2 1039.9L1091.7 1036.7L1093.2 1037.8L1094.7 1036.6L1096.2 1038.7L1097.7 1038.6L1099.2 1039.0L1100.7 1038.4L1102.2 1036.4L1103.7 1035.6L1105.2 1035.8L1106.7 1038.5L1108.2 1037.4L1109.7 1035.6L1111.2 1038.5L1112.7 1037.4L1114.2 1036.1L1115.7 1039.0L1117.2 1035.8L1118.7 1035.9L1120.2 1034.3L1121.7 1036.5L1123.2 1034.5L1124.7 1035.8L1126.2 1035.7L1127.7 1036.5L1129.2 1036.1L1130.7 1037.8L1132.2 1034.7L1133.7 1036.3L1135.2 1035.6L1136.7 1035.5L1138.2 1037.5L1139.7 1039.0L1141.2 1038.9L1142.7 1037.2L1144.2 1035.1L1145.7 1038.6L1147.2 1037.6L1148.7 1039.3L1150.2 1036.2L1151.7 1035.6L1153.2 1037.2L1154.7 1038.7L1156.2 1035.2L1157.7 1036.2L1159.2 1036.7L1160.7 1038.0L1162.2 1035.2L1163.7 1034.4L1165.2 1038.1L1166.7 1038.0L1168.2 1038.5L1169.7 1037.4L1171.2 1036.6L1172.7 1036.2L1174.2 1038.7L1175.7 1037.2L1177.2 1036.0L1178.7 1036.3L1180.2 1039.5L1181.7 1038.9L1183.2 1037.2L1184.7 1038.8L1186.2 1037.3L1187.7 1034.8L1189.2 1031.2L1190.7 1032.3L1192.2 1031.6L1193.7 1031.4L1195.2 1030.4L1196.7 1030.9L1198.2 1029.5L1199.7 1028.4L1201.2 1028.8L1202.7 1029.3L1204.2 1027.0L1205.7 1030.1L1207.2 1027.8L1208.7 1029.9L1210.2 1027.6L1211.7 1028.0L1213.2 1029.0L1214.7 1027.2L1216.2 1027.9L1217.7 1028.6L1219.2 1026.5L1220.7 1028.0L1222.2 1028.4L1223.7 1029.2L1225.2 1030.9L1226.7 1029.2L1228.2 1030.8L1229.7 1029.7L1231.2 1029.1L1232.7 1028.7L1234.2 1031.6L1235.7 1029.6L1237.2 1028.4L1238.7 1028.1L1240.2 1028.3L1241.7 1029.6L1243.2 1029.7L1244.7 1029.7L1246.2 1028.6L1247.7 1030.3L1249.2 1027.2L1250.7 1029.0L1252.2 1028.6L1253.7 1029.7L1255.2 1029.4L1256.7 1030.1L1258.2 1028.1L1259.7 1028.3L1261.2 1029.5L1262.7 1029.9L1264.2 1029.7L1265.7 1026.5L1267.2 1030.0L1268.7 1031.3L1270.2 1028.0L1271.7 1030.3L1273.2 1030.6L1274.7 1029.8L1276.2 1029.4L1277.7 1030.9L1279.2 1030.0L1280.7 1029.9L1282.2 1030.6L1283.7 1031.9L1285.2 1032.4L1286.7 1031.0L1288.2 1031.1L1289.7 1031.0L1291.2 1030.8L1292.7 1030.1L1294.2 1028.7L1295.7 1029.0L1297.2 1027.3L1298.7 1028.5L1300.2 1027.9L1301.7 1028.7L1303.2 1029.9L1304.7 1029.7L1306.2 1031.8L1307.7 1029.8L1309.2 1029.6L1310.7 1029.2L1312.2 1032.2L1313.7 1028.6L1315.2 1029.4L1316.7 1028.5L1318.2 1029.2L1319.7 1031.7L1321.2 1032.6L1322.7 1030.8L1324.2 1031.0L1325.7 1031.9L1327.2 1027.6L1328.7 1029.3L1330.2 1028.9L1331.7 1029.7L1333.2 1031.1L1334.7 1030.8L1336.2 1030.8L1337.7 1028.2L1339.2 1031.0L1340.7 1030.1L1342.2 1031.7L1343.7 1031.3L1345.2 1028.1L1346.7 1027.7L1348.2 1029.5L1349.7 1029.5L1351.2 1027.2L1352.7 1028.4L1354.2 1028.4L1355.7 1029.1L1357.2 1026.8L1358.7 1027.7L1360.2 1028.9L1361.7 1029.5L1363.2 1030.2L1364.7 1032.1L1366.2 1030.2L1367.7 1029.5L1369.2 1030.7L1370.7 1029.6L1372.2 1030.3L1373.7 1028.1L1375.2 1027.9L1376.7 1028.8L1378.2 1028.0L1379.7 1030.7L1381.2 1032.4L1382.7 1032.2L1384.2 1030.1L1385.7 1030.9L1387.2 1029.0L1388.7 1027.8L1390.2 1029.0L1391.7 1028.1L1393.2 1029.4L1394.7 1032.0L1396.2 1032.3L1397.7 1031.7L1399.2 1029.5L1400.7 1029.5L1402.2 1031.0L1403.7 1029.8L1405.2 1030.2L1406.7 1032.1L1408.2 1032.5L1409.7 1031.3L1411.2 1030.1L1412.7 1031.0L1414.2 1027.0L1415.7 1029.4L1417.2 1031.1L1418.7 1029.8L1420.2 1028.0L1421.7 1029.5L1423.2 1027.3L1424.7 1029.9L1426.2 1029.6L1427.7 1031.7L1429.2 1031.3L1430.7 1030.2L1432.2 1031.3L1433.7 1030.6L1435.2 1029.5L1436.7 1026.6L1438.2 1029.3L1439.7 1029.4L1441.2 1029.4L1442.7 1031.2L1444.2 1029.8L1445.7 1029.6L1447.2 1030.1L1448.7 1028.8L1450.2 1027.9L1451.7 1032.2L1453.2 1032.0L1454.7 1031.5L1456.2 1031.3L1457.7 1031.3L1459.2 1030.7L1460.7 1031.4L1462.2 1032.3L1463.7 1029.2L1465.2 1032.6L1466.7 1029.9L1468.2 1030.2L1469.7 1030.9L1471.2 1029.9L1472.7 1027.5L1474.2 1030.6L1475.7 1028.2L1477.2 1030.9L1478.7 1030.4L1480.2 1033.4L1481.7 1031.5L1483.2 1031.0L1484.7 1030.4L1486.2 1030.6L1487.7 1032.7L1489.2 1030.1L1490.7 1032.1L1492.2 1030.8L1493.7 1032.3L1495.2 1030.3L1496.7 1027.5L1498.2 1028.9L1499.7 1029.2L1501.2 1030.6L1502.7 1027.6L1504.2 1031.1L1505.7 1031.5L1507.2 1031.6L1508.7 1031.8L1510.2 1030.3L1511.7 1029.3L1513.2 1030.2L1514.7 1030.2L1516.2 1031.7L1517.7 1030.9L1519.2 1028.9L1520.7 1029.8L1522.2 1028.7L1523.7 1032.3L1525.2 1028.8L1526.7 1031.4L1528.2 1031.5L1529.7 1031.6L1531.2 1030.8L1532.7 1030.2L1534.2 1031.6L1535.7 1028.9L1537.2 1030.0L1538.7 1028.9L1540.2 1029.1L1541.7 1028.1L1543.2 1027.4L1544.7 1027.0L1546.2 1027.7L1547.7 1028.6L1549.2 1029.2L1550.7 1030.7L1552.2 1027.5L1553.7 1031.1L1555.2 1031.7L1556.7 1029.7L1558.2 1033.0L1559.7 1032.3L1561.2 1031.4L1562.7 1032.2L1564.2 1029.4L1565.7 1033.0L1567.2 1033.0L1568.7 1031.6L1570.2 1031.7L1571.7 1032.4L1573.2 1031.3L1574.7 1031.9L1576.2 1030.3L1577.7 1029.6L1579.2 1029.9L1580.7 1028.0L1582.2 1030.8L1583.7 1030.0L1585.2 1030.5L1586.7 1030.2L1588.2 1029.0L1589.7 1030.9L1591.2 1032.0L1592.7 1030.5L1594.2 1030.0L1595.7 1032.2L1597.2 1032.1L1598.7 1029.8L1600.2 1027.6L1601.7 1030.7L1603.2 1030.8L1604.7 1031.5L1606.2 1029.2L1607.7 1032.3L1609.2 1031.1L1610.7 1030.6L1612.2 1028.7L1613.7 1029.0L1615.2 1028.8L1616.7 1028.9L1618.2 1028.8L1619.7 1029.1L1621.2 1029.6L1622.7 1031.7L1624.2 1032.6L1625.7 1030.6L1627.2 1030.7L1628.7 1032.4L1630.2 1029.4L1631.7 1029.3L1633.2 1032.0L1634.7 1030.9L1636.2 1030.3L1637.7 1029.7L1639.2 1030.7L1640.7 1030.3L1642.2 1030.4L1643.7 1031.5L1645.2 1030.5L1646.7 1032.1L1648.2 1030.6L1649.7 1028.6L1651.2 1029.3L1652.7 1029.2L1654.2 1031.3L1655.7 1029.1L1657.2 1031.4L1658.7 1029.3L1660.2 1031.8L1661.7 1032.5L1663.2 1032.1L1664.7 1029.7L1666.2 1029.3L1667.7 1028.0L1669.2 1030.5L1670.7 1031.2L1672.2 1030.0L1673.7 1027.8L1675.2 1028.7L1676.7 1031.6L1678.2 1030.7L1679.7 1032.3L1681.2 1030.0L1682.7 1029.2L1684.2 1030.0L1685.7 1029.2L1687.2 1030.2L1688.7 1030.6L1690.2 1029.2L1691.7 1027.7L1693.2 1028.7L1694.7 1030.6L1696.2 1032.0L1697.7 1029.9L1699.2 1029.1L1700.7 1031.1L1702.2 1029.8L1703.7 1030.5L1705.2 1030.8L1706.7 1030.9L1708.2 1026.8L1709.7 1028.2L1711.2 1029.3L1712.7 1029.4L1714.2 1031.2L1715.7 1030.3L1717.2 1030.5L1718.7 1032.1L1720.2 1027.4L1721.7 1029.6L1723.2 1028.2L1724.7 1029.7L1726.2 1029.8L1727.7 1030.6L1729.2 1031.7L1730.7 1031.2L1732.2 1030.8L1733.7 1030.3L1735.2 1030.3L1736.7 1029.9L1738.2 1027.9L1739.7 1029.4L1741.2 1028.6L1742.7 1027.9L1744.2 1027.3L1745.7 1027.3L1747.2 1029.8L1748.7 1028.0L1750.2 1029.7L1751.7 1028.5L1753.2 1031.3L1754.7 1028.0L1756.2 1028.7L1757.7 1029.2L1759.2 1029.8L1760.7 1030.9L1762.2 1030.6L1763.7 1030.9L1765.2 1031.2L1766.7 1031.2L1768.2 1032.0L1769.7 1027.3L1771.2 1027.7L1772.7 1028.6L1774.2 1029.9L1775.7 1028.5L1777.2 1030.2L1778.7 1031.7L1780.2 1030.1L1781.7 1031.0L1783.2 1031.5L1784.7 1027.9L1786.2 1030.2L1787.7 1030.3L1789.2 1029.6L1790.7 1031.2L1792.2 1027.1L1793.7 1030.2L1795.2 1028.7L1796.7 1029.5L1798.2 1028.6L1799.7 1029.8L1801.2 1026.2L1802.7 1029.6L1804.2 1029.4L1805.7 1032.5L1807.2 1030.5L1808.7 1027.2L1810.2 1029.2L1811.7 1026.8L1813.2 1030.1L1814.7 1030.9L1816.2 1030.1L1817.7 1031.2L1819.2 1028.6L1820.7 1029.6L1822.2 1028.5L1823.7 1030.6L1825.2 1028.0L1826.7 1029.4L1828.2 1029.1L1828.3 1029.1V1045.1a4 4 0 0 1 -4 4H996.7a4 4 0 0 1 -4 -4z" fill="#2fd19b"/>
<rect x="1817.5" y="1018.0" width="10.0" height="27.0" fill="#5d9c88" rx="2" opacity="0.85"/>
<use href="#i-note" x="1015.2" y="1020.6" width="14.1" height="14.4" color="#ffffff" />
<text x="1039.1" y="1032.8" font-size="14.5" fill="#ffffff" textLength="51.4" lengthAdjust="spacingAndGlyphs" font-weight="bold">Particle</text>
<path d="M1702 752.6a2 2 0 0 1 2-2h13a2 2 0 0 1 2 2v9.4l-8.5 8.4-8.5-8.4z" fill="#2d7fe8"/>
<rect x="1709.4" y="768.0" width="2.0" height="392.6" fill="#2d7fe8"/>
<rect x="797.0" y="1174.1" width="1499.6" height="6.5" fill="#474747" rx="3.2"/>
</svg></div>
</body></html>
